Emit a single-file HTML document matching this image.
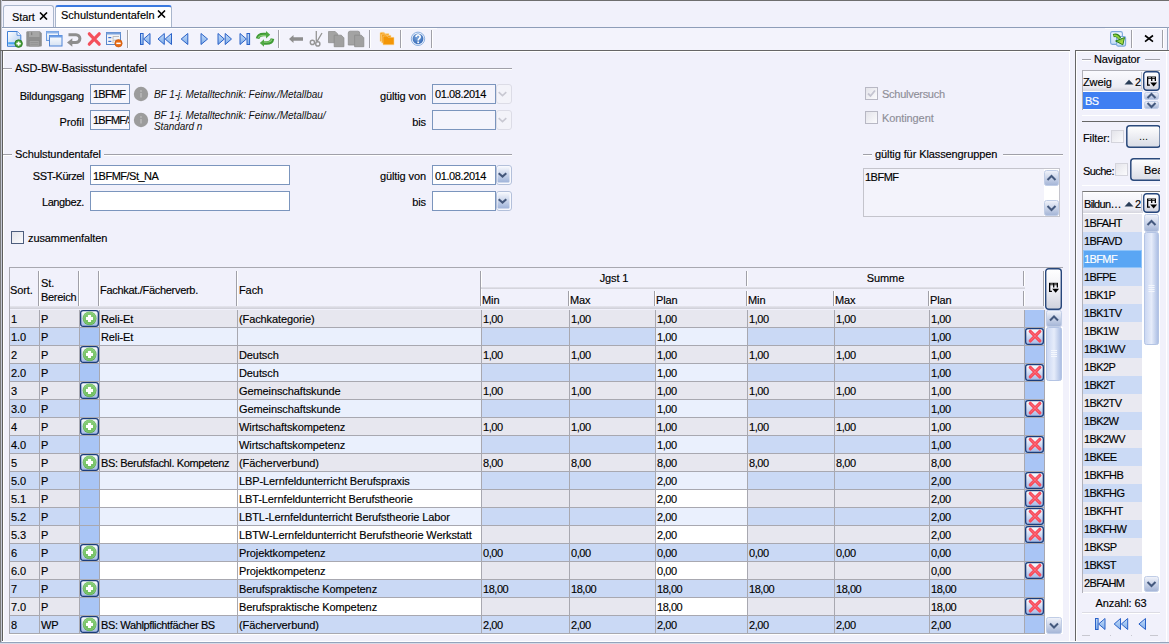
<!DOCTYPE html><html><head><meta charset="utf-8"><style>
html,body{margin:0;padding:0;}
body{width:1169px;height:644px;overflow:hidden;position:relative;background:#f1f1fb;font-family:"Liberation Sans",sans-serif;}
body div,body svg{position:absolute;}
.t{font-size:11px;line-height:14px;letter-spacing:-0.1px;color:#000;white-space:nowrap;-webkit-text-stroke:0.15px currentColor;}
.i{font-size:10px;font-style:italic;line-height:11px;letter-spacing:-0.06px;color:#111;white-space:nowrap;}
</style></head><body>
<div style="left:0px;top:0px;width:1169px;height:1px;background:#6e6e6e"></div>
<div style="left:0px;top:0px;width:1px;height:644px;background:#7c7c7c"></div>
<div style="left:1px;top:0px;width:1px;height:644px;background:#c4c8d4"></div>
<div style="left:3px;top:5px;width:51px;height:22px;background:#f6f6fd;border:1px solid #a9b6cc;border-bottom:none;border-radius:3px 3px 0 0;box-sizing:border-box"></div>
<div class="t" style="left:12px;top:10px;">Start</div>
<svg style="left:39px;top:12px" width="9" height="8" viewBox="0 0 9 8"><path d="M1 0.5L8 7.5M8 0.5L1 7.5" stroke="#000" stroke-width="1.6"/></svg>
<div style="left:55px;top:5px;width:117px;height:23px;background:#fff;border:1px solid #a9b6cc;border-top:2px solid #3c7ae0;border-bottom:none;border-radius:3px 3px 0 0;box-sizing:border-box"></div>
<div class="t" style="left:61px;top:8px;letter-spacing:0px">Schulstundentafeln</div>
<svg style="left:157px;top:9.5px" width="9" height="8" viewBox="0 0 9 8"><path d="M1 0.5L8 7.5M8 0.5L1 7.5" stroke="#000" stroke-width="1.6"/></svg>
<div style="left:2px;top:27px;width:1167px;height:1px;background:#8e9db8"></div>
<div style="left:2px;top:28px;width:1167px;height:22px;background:#f3f3fc"></div>
<div style="left:2px;top:28px;width:435px;height:1px;background:#fff"></div>
<div style="left:1105px;top:28px;width:62px;height:1px;background:#fff"></div>
<div style="left:1167px;top:27px;width:1px;height:23px;background:#9aa8c0"></div>
<div style="left:127px;top:30px;width:1px;height:18px;background:#a0a0a8"></div>
<div style="left:128px;top:30px;width:1px;height:18px;background:#fff"></div>
<div style="left:278px;top:30px;width:1px;height:18px;background:#a0a0a8"></div>
<div style="left:279px;top:30px;width:1px;height:18px;background:#fff"></div>
<div style="left:369px;top:30px;width:1px;height:18px;background:#a0a0a8"></div>
<div style="left:370px;top:30px;width:1px;height:18px;background:#fff"></div>
<div style="left:400px;top:30px;width:1px;height:18px;background:#a0a0a8"></div>
<div style="left:401px;top:30px;width:1px;height:18px;background:#fff"></div>
<div style="left:431px;top:30px;width:1px;height:18px;background:#a0a0a8"></div>
<div style="left:432px;top:30px;width:1px;height:18px;background:#fff"></div>
<div style="left:1131px;top:30px;width:1px;height:18px;background:#a0a0a8"></div>
<div style="left:1132px;top:30px;width:1px;height:18px;background:#fff"></div>
<div style="left:1162px;top:30px;width:1px;height:18px;background:#a0a0a8"></div>
<div style="left:1163px;top:30px;width:1px;height:18px;background:#fff"></div>
<svg style="left:0;top:28px" width="440" height="22" viewBox="0 28 440 22">
<defs>
<linearGradient id="gdoc" x1="0" y1="0" x2="1" y2="1"><stop offset="0" stop-color="#ffffff"/><stop offset="1" stop-color="#a9c8f0"/></linearGradient>
<linearGradient id="gnav" x1="0" y1="0" x2="1" y2="0"><stop offset="0" stop-color="#a8cdf8"/><stop offset="1" stop-color="#1f5fcf"/></linearGradient>
<linearGradient id="gnv" x1="0" y1="0" x2="0" y2="1"><stop offset="0" stop-color="#c4dcfa"/><stop offset="1" stop-color="#80ade8"/></linearGradient>
<linearGradient id="gnavl" x1="1" y1="0" x2="0" y2="0"><stop offset="0" stop-color="#a8cdf8"/><stop offset="1" stop-color="#1f5fcf"/></linearGradient>
<linearGradient id="gwin" x1="0" y1="0" x2="0" y2="1"><stop offset="0" stop-color="#ffffff"/><stop offset="1" stop-color="#d5e2f3"/></linearGradient>
<radialGradient id="ghelp" cx="0.45" cy="0.35" r="0.7"><stop offset="0" stop-color="#80a8dc"/><stop offset="1" stop-color="#2e64b4"/></radialGradient>
</defs>
<!-- new doc -->
<path d="M7.5 31.5H17.2L20.8 35.1V46.3H7.5Z" fill="url(#gdoc)" stroke="#3f7fd6" stroke-width="1"/>
<path d="M17 31.5V35.3H20.8" fill="#fff" stroke="#3f7fd6" stroke-width="0.8"/>
<rect x="8.2" y="42.2" width="9" height="2.2" fill="#47a4f0"/>
<circle cx="18.6" cy="43.6" r="3.8" fill="#43a036" stroke="#2a7420" stroke-width="0.8"/>
<path d="M18.6 41.4V45.8M16.4 43.6H20.8" stroke="#fff" stroke-width="1.6"/>
<!-- save -->
<path d="M27.5 31.2H39.8L41.8 33.2V45.6A1 1 0 0 1 40.8 46.6H27.3A1 1 0 0 1 26.3 45.6V32.4A1.2 1.2 0 0 1 27.5 31.2Z" fill="#8f8f8f"/>
<rect x="29" y="31.5" width="10.5" height="5.5" fill="#a6a6a6"/>
<rect x="31.2" y="32.3" width="1" height="2.8" fill="#7a7a7a"/>
<rect x="29.2" y="40.5" width="10" height="5.6" fill="#a4a4a4" stroke="#878787" stroke-width="0.6"/>
<path d="M30.3 42.5H38.2M30.3 44.3H38.2" stroke="#8a8a8a" stroke-width="0.6"/>
<!-- windows -->
<rect x="46.5" y="31.5" width="12" height="9" fill="url(#gwin)" stroke="#6b9be0" stroke-width="1"/>
<rect x="46.5" y="31.5" width="12" height="2" fill="#8fb5ea"/>
<rect x="49.5" y="35.5" width="12.5" height="10.5" fill="url(#gwin)" stroke="#4f84d6" stroke-width="1"/>
<rect x="49.5" y="35.5" width="12.5" height="2" fill="#6f9fe6"/>
<!-- undo -->
<path d="M68.5 34.7H76A3.9 3.9 0 0 1 76 42.5H71" fill="none" stroke="#8e8e8e" stroke-width="3"/>
<path d="M67 42.5L72.3 38.3V46.7Z" fill="#8e8e8e"/>
<!-- red x -->
<path d="M89.3 33.8L99.2 44.2M99.2 33.8L89.3 44.2" stroke="#f4505c" stroke-width="3.2" stroke-linecap="round"/>
<!-- list minus -->
<rect x="106.5" y="32.5" width="14" height="12" fill="#f2f4f8" stroke="#5a88cc" stroke-width="1"/>
<rect x="106.5" y="32.5" width="14" height="2" fill="#7aa2dc"/>
<rect x="108.3" y="37" width="3" height="1.2" fill="#3a6fd0"/><path d="M113 39.5V36.5H119" stroke="#b4b4b4" stroke-width="0.9" fill="none"/>
<rect x="108.3" y="40.8" width="3" height="1.2" fill="#3a6fd0"/><path d="M113 43V40.2H117" stroke="#b4b4b4" stroke-width="0.9" fill="none"/>
<circle cx="118.5" cy="43.3" r="3.7" fill="#e86a12" stroke="#c05008" stroke-width="0.6"/>
<rect x="116.3" y="42.6" width="4.4" height="1.5" fill="#fff"/>
<!-- nav first -->
<rect x="140.5" y="33.5" width="2.6" height="11" fill="url(#gnv)" stroke="#2a62c8" stroke-width="1"/>
<path d="M150 33.5V44.5L143.6 39Z" fill="url(#gnv)" stroke="#2a62c8" stroke-width="1" stroke-linejoin="round"/>
<!-- nav prev page -->
<path d="M164.3 33.5V44.5L158 39Z" fill="url(#gnv)" stroke="#2a62c8" stroke-width="1" stroke-linejoin="round"/>
<path d="M171.5 33.5V44.5L165.2 39Z" fill="url(#gnv)" stroke="#2a62c8" stroke-width="1" stroke-linejoin="round"/>
<!-- prev -->
<path d="M187.8 33.5V44.5L181.2 39Z" fill="url(#gnv)" stroke="#2a62c8" stroke-width="1" stroke-linejoin="round"/>
<!-- next -->
<path d="M201 33.5V44.5L207.6 39Z" fill="url(#gnv)" stroke="#2a62c8" stroke-width="1" stroke-linejoin="round"/>
<!-- next page -->
<path d="M218 33.5V44.5L224.3 39Z" fill="url(#gnv)" stroke="#2a62c8" stroke-width="1" stroke-linejoin="round"/>
<path d="M225.2 33.5V44.5L231.5 39Z" fill="url(#gnv)" stroke="#2a62c8" stroke-width="1" stroke-linejoin="round"/>
<!-- last -->
<path d="M240 33.5V44.5L246.4 39Z" fill="url(#gnv)" stroke="#2a62c8" stroke-width="1" stroke-linejoin="round"/>
<rect x="247" y="33.5" width="2.6" height="11" fill="url(#gnv)" stroke="#2a62c8" stroke-width="1"/>
<!-- refresh -->
<path d="M257.6 38.6Q258.3 34.5 263.5 34.5H266.8" fill="none" stroke="#3f9a35" stroke-width="3.6"/>
<path d="M258.2 37.8Q259 35.3 263.5 35.3H266.8" fill="none" stroke="#86cc74" stroke-width="1.2"/>
<path d="M266 31L270.2 34.8L266 38.6Z" fill="#4fa843"/>
<path d="M272.5 38.6Q271.8 43 266.5 43H263.2" fill="none" stroke="#3f9a35" stroke-width="3.6"/>
<path d="M271.8 39.4Q271 42.2 266.5 42.2H263.2" fill="none" stroke="#86cc74" stroke-width="1.2"/>
<path d="M264 39.2L259.8 43L264 46.7Z" fill="#4fa843"/>
<!-- arrow left -->
<path d="M289 39L293.5 35V37.3H303V40.8H293.5V43Z" fill="#8e8e8e"/>
<!-- scissors -->
<path d="M316.3 31V41.5M322 33L316.8 41.8" stroke="#959595" stroke-width="1.3" fill="none"/>
<circle cx="312.4" cy="42.4" r="2.1" fill="none" stroke="#959595" stroke-width="1.4"/>
<circle cx="317.8" cy="43.9" r="2.1" fill="none" stroke="#959595" stroke-width="1.4"/>
<!-- copy -->
<path d="M328.5 31.5H335.2L337.7 34V42.7H328.5Z" fill="#a3a3a3" stroke="#929292" stroke-width="0.8"/>
<path d="M334.2 35.2H341.3L343.9 37.8V46.7H334.2Z" fill="#a0a0a0" stroke="#8c8c8c" stroke-width="0.8"/>
<!-- paste -->
<path d="M348.3 33A1.8 1.8 0 0 1 350.1 31.2H357.9A1.8 1.8 0 0 1 359.7 33V45H348.3Z" fill="#a3a3a3" stroke="#8e8e8e" stroke-width="0.8"/>
<path d="M354.6 35.2H361.3L363.8 37.7V46.7H354.6Z" fill="#a0a0a0" stroke="#8c8c8c" stroke-width="0.8"/>
<!-- folder -->
<path d="M380 33.2A1 1 0 0 1 381 32.2H384L385 33.5H389V41.5H380Z" fill="#f6a21c" stroke="#fde2b0" stroke-width="0.6"/>
<path d="M381.6 35A1 1 0 0 1 382.6 34H385.5L386.5 35.3H391V43H381.6Z" fill="#f59c12" stroke="#fde2b0" stroke-width="0.6"/>
<path d="M383 37A1 1 0 0 1 384 36H387.2L388.2 37.3H394V44.8H383Z" fill="#f39606" stroke="#fbd79a" stroke-width="0.5"/>
<!-- help -->
<circle cx="418" cy="38.8" r="6.7" fill="#eaf1fb" stroke="#8db0e0" stroke-width="1"/>
<circle cx="418" cy="38.8" r="5.4" fill="url(#ghelp)"/>
<path d="M416 36.9A2.1 2 0 1 1 419.2 38.6C418.5 39 418.2 39.4 418.2 40.4" fill="none" stroke="#fff" stroke-width="1.6"/>
<rect x="417.3" y="41.5" width="1.8" height="1.7" fill="#fff"/>
</svg>
<svg style="left:1100px;top:28px" width="69" height="22" viewBox="1100 28 69 22">
<defs><linearGradient id="gsy" x1="0" y1="0" x2="0" y2="1"><stop offset="0" stop-color="#f4f9ff"/><stop offset="1" stop-color="#c3dcf6"/></linearGradient>
<linearGradient id="gar" x1="0" y1="0" x2="1" y2="1"><stop offset="0" stop-color="#4cb030"/><stop offset="1" stop-color="#d8ec50"/></linearGradient></defs>
<rect x="1110.6" y="31.6" width="11.8" height="12.8" rx="1.8" fill="url(#gsy)" stroke="#7aa6da" stroke-width="1.1"/>
<rect x="1116.6" y="36.5" width="9" height="9.6" rx="1.5" fill="url(#gsy)" stroke="#7aa6da" stroke-width="1.1"/>
<path d="M1113.3 35.6Q1117.5 34.2 1119.6 38.4" fill="none" stroke="#257c18" stroke-width="3.4"/>
<path d="M1113.6 35.6Q1117.3 34.8 1119.4 38.6" fill="none" stroke="#8fd23c" stroke-width="1.7"/>
<path d="M1115.6 41L1124.5 37.5L1122.8 44.8Z" fill="url(#gar)" stroke="#257c18" stroke-width="1" stroke-linejoin="round"/>
<path d="M1145 35.5L1153 41.7M1153 35.5L1145 41.7" stroke="#000" stroke-width="1.6"/>
</svg>

<div style="left:0px;top:50px;width:1070px;height:1px;background:#666"></div>
<div style="left:2px;top:51px;width:1067px;height:1px;background:#fff"></div>
<div style="left:2px;top:50px;width:1px;height:591px;background:#5e5e5e"></div>
<div style="left:3px;top:51px;width:1px;height:590px;background:#fff"></div>
<div style="left:1069px;top:51px;width:1px;height:592px;background:#fff"></div>
<div style="left:1075px;top:50px;width:94px;height:1px;background:#666"></div>
<div style="left:1075px;top:50px;width:1px;height:591px;background:#666"></div>
<div style="left:1076px;top:51px;width:93px;height:1px;background:#fff"></div>
<div style="left:1076px;top:51px;width:1px;height:592px;background:#fff"></div>
<div style="left:1166px;top:52px;width:1px;height:590px;background:#fff"></div>
<div style="left:2px;top:641px;width:1167px;height:1px;background:#fff"></div>
<div style="left:0px;top:642px;width:1169px;height:1px;background:#94a4bc"></div>
<div style="left:0px;top:643px;width:1169px;height:1px;background:#d8dae6"></div>
<div style="left:3px;top:68px;width:9px;height:1px;background:#a0a0a8"></div>
<div style="left:3px;top:69px;width:9px;height:1px;background:#fff"></div>
<div style="left:150px;top:68px;width:362px;height:1px;background:#a0a0a8"></div>
<div style="left:150px;top:69px;width:362px;height:1px;background:#fff"></div>
<div class="t" style="left:15px;top:61px;">ASD-BW-Basisstundentafel</div>
<div class="t" style="left:-316px;width:400px;text-align:right;top:89px;letter-spacing:-0.2px">Bildungsgang</div>
<div style="left:90px;top:84px;width:40px;height:20px;background:#f6f6fd;border:1px solid #7b95bd;box-sizing:border-box"></div>
<div class="t" style="left:93px;top:87px;letter-spacing:-0.75px">1BFMF</div>
<svg style="left:133px;top:86px" width="16" height="16" viewBox="0 0 16 16"><circle cx="8" cy="8" r="7.2" fill="#9c9c9c"/><rect x="7.2" y="7" width="1.6" height="4.5" fill="#b9b9b9"/><circle cx="8" cy="5" r="0.9" fill="#b9b9b9"/></svg>
<div class="i" style="left:154px;top:89px">BF 1-j. Metalltechnik: Feinw./Metallbau</div>
<div class="t" style="left:26px;width:400px;text-align:right;top:89px;">gültig von</div>
<div style="left:432px;top:84px;width:64px;height:20px;background:#f4f4fc;border:1px solid #7b95bd;box-sizing:border-box"></div>
<div class="t" style="left:435px;top:87px;letter-spacing:-0.4px">01.08.2014</div>
<svg style="left:496px;top:84px" width="16" height="20" viewBox="0 0 16 20"><rect x="0.5" y="0.5" width="15" height="19" rx="2.5" fill="#f3f3f9" stroke="#dcdce6"/><path d="M2.7 8.2L6.5 11.6L10.3 8.2" stroke="#c8c8d2" stroke-width="1.6" fill="none"/></svg>
<div class="t" style="left:-316px;width:400px;text-align:right;top:115px;">Profil</div>
<div style="left:90px;top:110px;width:40px;height:20px;overflow:hidden;background:#f6f6fd;border:1px solid #7b95bd;box-sizing:border-box"><div class="t" style="left:2px;top:2px;letter-spacing:-0.75px">1BFMF/St</div></div>
<svg style="left:133px;top:112px" width="16" height="16" viewBox="0 0 16 16"><circle cx="8" cy="8" r="7.2" fill="#9c9c9c"/><rect x="7.2" y="7" width="1.6" height="4.5" fill="#b9b9b9"/><circle cx="8" cy="5" r="0.9" fill="#b9b9b9"/></svg>
<div class="i" style="left:154px;top:110px">BF 1-j. Metalltechnik: Feinw./Metallbau/<br>Standard n</div>
<div class="t" style="left:26px;width:400px;text-align:right;top:115px;">bis</div>
<div style="left:432px;top:110px;width:64px;height:20px;background:#f4f4fc;border:1px solid #7b95bd;box-sizing:border-box"></div>
<svg style="left:496px;top:110px" width="16" height="20" viewBox="0 0 16 20"><rect x="0.5" y="0.5" width="15" height="19" rx="2.5" fill="#f3f3f9" stroke="#dcdce6"/><path d="M2.7 8.2L6.5 11.6L10.3 8.2" stroke="#c8c8d2" stroke-width="1.6" fill="none"/></svg>
<div style="left:865px;top:87px;width:13px;height:13px;box-sizing:border-box;border:1px solid #b8b8c4;background:linear-gradient(135deg,#e4e4ea,#fbfbfd)"></div>
<svg style="left:865px;top:87px" width="13" height="13" viewBox="0 0 13 13"><path d="M3 6.5L5.5 9L10 3.5" stroke="#c4c4d0" stroke-width="1.8" fill="none"/></svg>
<div class="t" style="left:882px;top:87px;color:#8e8e98;letter-spacing:-0.27px">Schulversuch</div>
<div style="left:865px;top:111px;width:13px;height:13px;box-sizing:border-box;border:1px solid #b8b8c4;background:linear-gradient(135deg,#e4e4ea,#fbfbfd)"></div>
<div class="t" style="left:882px;top:111px;color:#8e8e98">Kontingent</div>
<div style="left:3px;top:154px;width:9px;height:1px;background:#a0a0a8"></div>
<div style="left:3px;top:155px;width:9px;height:1px;background:#fff"></div>
<div style="left:104px;top:154px;width:408px;height:1px;background:#a0a0a8"></div>
<div style="left:104px;top:155px;width:408px;height:1px;background:#fff"></div>
<div class="t" style="left:15px;top:147px;">Schulstundentafel</div>
<div class="t" style="left:-316px;width:400px;text-align:right;top:169px;letter-spacing:-0.45px">SST-Kürzel</div>
<div style="left:90px;top:165px;width:200px;height:20px;background:#fff;border:1px solid #7b95bd;box-sizing:border-box"></div>
<div class="t" style="left:93px;top:169px;letter-spacing:-0.5px">1BFMF/St_NA</div>
<div class="t" style="left:-316px;width:400px;text-align:right;top:195px;letter-spacing:-0.4px">Langbez.</div>
<div style="left:90px;top:191px;width:200px;height:20px;background:#fff;border:1px solid #7b95bd;box-sizing:border-box"></div>
<div class="t" style="left:26px;width:400px;text-align:right;top:169px;">gültig von</div>
<div style="left:432px;top:165px;width:64px;height:20px;background:#fff;border:1px solid #7b95bd;box-sizing:border-box"></div>
<div class="t" style="left:435px;top:169px;letter-spacing:-0.4px">01.08.2014</div>
<svg style="left:496px;top:165px" width="16" height="20" viewBox="0 0 16 20"><defs><linearGradient id="dd496165" x1="0" y1="0" x2="0" y2="1"><stop offset="0" stop-color="#f6f8fd"/><stop offset="1" stop-color="#9fb3d9"/></linearGradient></defs><rect x="0.5" y="0.5" width="15" height="19" rx="2.5" fill="#f8f9fd" stroke="#b3c0da"/><rect x="1.5" y="1.5" width="12" height="16" rx="1" fill="url(#dd496165)"/><path d="M2.7 8.2L6.5 11.6L10.3 8.2" stroke="#44577a" stroke-width="2" fill="none"/></svg>
<div class="t" style="left:26px;width:400px;text-align:right;top:195px;">bis</div>
<div style="left:432px;top:191px;width:64px;height:20px;background:#fff;border:1px solid #7b95bd;box-sizing:border-box"></div>
<svg style="left:496px;top:191px" width="16" height="20" viewBox="0 0 16 20"><defs><linearGradient id="dd496191" x1="0" y1="0" x2="0" y2="1"><stop offset="0" stop-color="#f6f8fd"/><stop offset="1" stop-color="#9fb3d9"/></linearGradient></defs><rect x="0.5" y="0.5" width="15" height="19" rx="2.5" fill="#f8f9fd" stroke="#b3c0da"/><rect x="1.5" y="1.5" width="12" height="16" rx="1" fill="url(#dd496191)"/><path d="M2.7 8.2L6.5 11.6L10.3 8.2" stroke="#44577a" stroke-width="2" fill="none"/></svg>
<div style="left:863px;top:154px;width:9px;height:1px;background:#a0a0a8"></div>
<div style="left:863px;top:155px;width:9px;height:1px;background:#fff"></div>
<div style="left:1003px;top:154px;width:60px;height:1px;background:#a0a0a8"></div>
<div style="left:1003px;top:155px;width:60px;height:1px;background:#fff"></div>
<div class="t" style="left:875px;top:147px;">gültig für Klassengruppen</div>
<div style="left:863px;top:168px;width:197px;height:49px;background:#f3f3fb;border:1px solid #c4c4cc;box-sizing:border-box"></div>
<div class="t" style="left:865px;top:170px;letter-spacing:-0.5px">1BFMF</div>
<div style="left:1044px;top:169px;width:15px;height:47px;background:#fff"></div>
<svg style="left:1044px;top:170px" width="15" height="16" viewBox="0 0 15 16"><defs><linearGradient id="sbk1" x1="0" y1="0" x2="0" y2="1"><stop offset="0" stop-color="#f2f4fb"/><stop offset="1" stop-color="#a3b4d6"/></linearGradient></defs><rect x="0.5" y="0.5" width="14" height="15" rx="2" fill="url(#sbk1)" stroke="#c0cde6"/><path d="M3.5 10.0L7.5 6.0L11.5 10.0" stroke="#44597e" stroke-width="2" fill="none"/></svg>
<svg style="left:1044px;top:200px" width="15" height="16" viewBox="0 0 15 16"><defs><linearGradient id="sbk2" x1="0" y1="0" x2="0" y2="1"><stop offset="0" stop-color="#f2f4fb"/><stop offset="1" stop-color="#a3b4d6"/></linearGradient></defs><rect x="0.5" y="0.5" width="14" height="15" rx="2" fill="url(#sbk2)" stroke="#c0cde6"/><path d="M3.5 6.0L7.5 10.0L11.5 6.0" stroke="#44597e" stroke-width="2" fill="none"/></svg>
<div style="left:11px;top:231px;width:13px;height:13px;box-sizing:border-box;border:1px solid #4d5d7d;background:linear-gradient(135deg,#e4e4ea,#fbfbfd)"></div>
<div class="t" style="left:28px;top:231px;">zusammenfalten</div>
<div style="left:9px;top:267px;width:1054px;height:1px;background:#a8a8b0"></div>
<div style="left:9px;top:267px;width:1px;height:367px;background:#a8a8b0"></div>
<div class="t" style="left:10px;top:283px;">Sort.</div>
<div class="t" style="left:41px;top:276px;">St.</div>
<div class="t" style="left:41px;top:290px;letter-spacing:-0.3px">Bereich</div>
<div class="t" style="left:100px;top:283px;letter-spacing:-0.3px">Fachkat./Fächerverb.</div>
<div class="t" style="left:239px;top:283px;">Fach</div>
<div class="t" style="left:481px;width:266px;text-align:center;top:271px;">Jgst 1</div>
<div class="t" style="left:747px;width:277px;text-align:center;top:271px;">Summe</div>
<div class="t" style="left:482px;top:293px;">Min</div>
<div class="t" style="left:570px;top:293px;">Max</div>
<div class="t" style="left:656px;top:293px;">Plan</div>
<div class="t" style="left:748px;top:293px;">Min</div>
<div class="t" style="left:835px;top:293px;">Max</div>
<div class="t" style="left:930px;top:293px;">Plan</div>
<div style="left:38px;top:271px;width:1px;height:35px;background:#a0a0a8"></div>
<div style="left:39px;top:271px;width:1px;height:35px;background:#fff"></div>
<div style="left:78px;top:271px;width:1px;height:35px;background:#a0a0a8"></div>
<div style="left:79px;top:271px;width:1px;height:35px;background:#fff"></div>
<div style="left:98px;top:271px;width:1px;height:35px;background:#a0a0a8"></div>
<div style="left:99px;top:271px;width:1px;height:35px;background:#fff"></div>
<div style="left:236px;top:271px;width:1px;height:35px;background:#a0a0a8"></div>
<div style="left:237px;top:271px;width:1px;height:35px;background:#fff"></div>
<div style="left:480px;top:271px;width:1px;height:35px;background:#a0a0a8"></div>
<div style="left:481px;top:271px;width:1px;height:35px;background:#fff"></div>
<div style="left:568px;top:291px;width:1px;height:15px;background:#a0a0a8"></div>
<div style="left:569px;top:291px;width:1px;height:15px;background:#fff"></div>
<div style="left:654px;top:291px;width:1px;height:15px;background:#a0a0a8"></div>
<div style="left:655px;top:291px;width:1px;height:15px;background:#fff"></div>
<div style="left:833px;top:291px;width:1px;height:15px;background:#a0a0a8"></div>
<div style="left:834px;top:291px;width:1px;height:15px;background:#fff"></div>
<div style="left:928px;top:291px;width:1px;height:15px;background:#a0a0a8"></div>
<div style="left:929px;top:291px;width:1px;height:15px;background:#fff"></div>
<div style="left:746px;top:271px;width:1px;height:15px;background:#a0a0a8"></div>
<div style="left:747px;top:271px;width:1px;height:15px;background:#fff"></div>
<div style="left:746px;top:291px;width:1px;height:15px;background:#a0a0a8"></div>
<div style="left:747px;top:291px;width:1px;height:15px;background:#fff"></div>
<div style="left:1023px;top:271px;width:1px;height:15px;background:#a0a0a8"></div>
<div style="left:1024px;top:271px;width:1px;height:15px;background:#fff"></div>
<div style="left:1023px;top:291px;width:1px;height:15px;background:#a0a0a8"></div>
<div style="left:1024px;top:291px;width:1px;height:15px;background:#fff"></div>
<div style="left:1043px;top:271px;width:1px;height:35px;background:#a0a0a8"></div>
<div style="left:1044px;top:271px;width:1px;height:35px;background:#fff"></div>
<div style="left:481px;top:287px;width:544px;height:2px;background:linear-gradient(#e4e4ec,#cfcfd8)"></div>
<div style="left:10px;top:306px;width:1034px;height:3px;background:linear-gradient(#e6e6ee,#cdcdd6)"></div>
<div style="left:10px;top:310px;width:29px;height:17px;background:#e7e7ef"></div>
<div style="left:40px;top:310px;width:39px;height:17px;background:#e7e7ef"></div>
<div style="left:80px;top:310px;width:19px;height:17px;background:#e7e7ef"></div>
<div style="left:100px;top:310px;width:137px;height:17px;background:#e7e7ef"></div>
<div style="left:238px;top:310px;width:243px;height:17px;background:#e7e7ef"></div>
<div style="left:482px;top:310px;width:87px;height:17px;background:#e7e7ef"></div>
<div style="left:570px;top:310px;width:85px;height:17px;background:#e7e7ef"></div>
<div style="left:656px;top:310px;width:91px;height:17px;background:#e7e7ef"></div>
<div style="left:748px;top:310px;width:86px;height:17px;background:#e7e7ef"></div>
<div style="left:835px;top:310px;width:94px;height:17px;background:#e7e7ef"></div>
<div style="left:930px;top:310px;width:94px;height:17px;background:#e7e7ef"></div>
<div style="left:1025px;top:310px;width:19px;height:17px;background:#a9c5f5"></div>
<div style="left:10px;top:327px;width:1035px;height:1px;background:#a8a8b0"></div>
<div style="left:39px;top:310px;width:1px;height:17px;background:#a8a8b0"></div>
<div style="left:79px;top:310px;width:1px;height:17px;background:#a8a8b0"></div>
<div style="left:99px;top:310px;width:1px;height:17px;background:#a8a8b0"></div>
<div style="left:237px;top:310px;width:1px;height:17px;background:#a8a8b0"></div>
<div style="left:481px;top:310px;width:1px;height:17px;background:#a8a8b0"></div>
<div style="left:569px;top:310px;width:1px;height:17px;background:#a8a8b0"></div>
<div style="left:655px;top:310px;width:1px;height:17px;background:#a8a8b0"></div>
<div style="left:747px;top:310px;width:1px;height:17px;background:#a8a8b0"></div>
<div style="left:834px;top:310px;width:1px;height:17px;background:#a8a8b0"></div>
<div style="left:929px;top:310px;width:1px;height:17px;background:#a8a8b0"></div>
<div style="left:1024px;top:310px;width:1px;height:17px;background:#a8a8b0"></div>
<div style="left:1044px;top:310px;width:1px;height:17px;background:#a8a8b0"></div>
<div class="t" style="left:11px;top:312px;">1</div>
<div class="t" style="left:41px;top:312px;">P</div>
<svg style="left:80px;top:310px" width="19" height="17" viewBox="0 0 19 17"><defs><linearGradient id="bg0" x1="0" y1="0" x2="0" y2="1"><stop offset="0" stop-color="#ffffff"/><stop offset="1" stop-color="#a2b8e6"/></linearGradient><radialGradient id="gc0" cx="0.5" cy="0.4" r="0.6"><stop offset="0" stop-color="#9ad88a"/><stop offset="0.75" stop-color="#6cbc5c"/><stop offset="1" stop-color="#54a846"/></radialGradient></defs><rect x="0.65" y="0.65" width="17.7" height="15.7" rx="2.5" fill="url(#bg0)" stroke="#1b3d7a" stroke-width="1.3"/><circle cx="9.6" cy="8.4" r="6.9" fill="url(#gc0)"/><circle cx="9.6" cy="8.4" r="5.7" fill="none" stroke="#c4e8b8" stroke-width="0.7" opacity="0.5"/><rect x="6" y="7" width="7" height="3" fill="#fff"/><rect x="8" y="5" width="3" height="7" fill="#fff"/></svg>
<div class="t" style="left:101px;top:312px;">Reli-Et</div>
<div class="t" style="left:239px;top:312px;">(Fachkategorie)</div>
<div class="t" style="left:483px;top:312px;letter-spacing:-0.45px">1,00</div>
<div class="t" style="left:571px;top:312px;letter-spacing:-0.45px">1,00</div>
<div class="t" style="left:657px;top:312px;letter-spacing:-0.45px">1,00</div>
<div class="t" style="left:749px;top:312px;letter-spacing:-0.45px">1,00</div>
<div class="t" style="left:836px;top:312px;letter-spacing:-0.45px">1,00</div>
<div class="t" style="left:931px;top:312px;letter-spacing:-0.45px">1,00</div>
<div style="left:10px;top:328px;width:29px;height:17px;background:#cad9f5"></div>
<div style="left:40px;top:328px;width:39px;height:17px;background:#cad9f5"></div>
<div style="left:80px;top:328px;width:19px;height:17px;background:#a9c5f5"></div>
<div style="left:100px;top:328px;width:137px;height:17px;background:#eaf0fd"></div>
<div style="left:238px;top:328px;width:243px;height:17px;background:#eaf0fd"></div>
<div style="left:482px;top:328px;width:87px;height:17px;background:#cad9f5"></div>
<div style="left:570px;top:328px;width:85px;height:17px;background:#cad9f5"></div>
<div style="left:656px;top:328px;width:91px;height:17px;background:#eaf0fd"></div>
<div style="left:748px;top:328px;width:86px;height:17px;background:#cad9f5"></div>
<div style="left:835px;top:328px;width:94px;height:17px;background:#cad9f5"></div>
<div style="left:930px;top:328px;width:94px;height:17px;background:#cad9f5"></div>
<div style="left:1025px;top:328px;width:19px;height:17px;background:#a9c5f5"></div>
<div style="left:10px;top:345px;width:1035px;height:1px;background:#a8a8b0"></div>
<div style="left:39px;top:328px;width:1px;height:17px;background:#a8a8b0"></div>
<div style="left:79px;top:328px;width:1px;height:17px;background:#a8a8b0"></div>
<div style="left:99px;top:328px;width:1px;height:17px;background:#a8a8b0"></div>
<div style="left:237px;top:328px;width:1px;height:17px;background:#a8a8b0"></div>
<div style="left:481px;top:328px;width:1px;height:17px;background:#a8a8b0"></div>
<div style="left:569px;top:328px;width:1px;height:17px;background:#a8a8b0"></div>
<div style="left:655px;top:328px;width:1px;height:17px;background:#a8a8b0"></div>
<div style="left:747px;top:328px;width:1px;height:17px;background:#a8a8b0"></div>
<div style="left:834px;top:328px;width:1px;height:17px;background:#a8a8b0"></div>
<div style="left:929px;top:328px;width:1px;height:17px;background:#a8a8b0"></div>
<div style="left:1024px;top:328px;width:1px;height:17px;background:#a8a8b0"></div>
<div style="left:1044px;top:328px;width:1px;height:17px;background:#a8a8b0"></div>
<div class="t" style="left:11px;top:330px;">1.0</div>
<div class="t" style="left:41px;top:330px;">P</div>
<div class="t" style="left:101px;top:330px;">Reli-Et</div>
<div class="t" style="left:239px;top:330px;"></div>
<div class="t" style="left:657px;top:330px;letter-spacing:-0.45px">1,00</div>
<div class="t" style="left:931px;top:330px;letter-spacing:-0.45px">1,00</div>
<svg style="left:1025px;top:328px" width="19" height="17" viewBox="0 0 19 17"><defs><linearGradient id="xb1" x1="0" y1="0" x2="0" y2="1"><stop offset="0" stop-color="#ffffff"/><stop offset="1" stop-color="#a2b8e6"/></linearGradient></defs><rect x="0.65" y="0.65" width="17.7" height="15.7" rx="2.5" fill="url(#xb1)" stroke="#1b3d7a" stroke-width="1.3"/><path d="M5.3 3.3L14.8 12.9M14.8 3.3L5.3 12.9" stroke="#f84c5c" stroke-width="3.3" stroke-linecap="round"/><path d="M6 4L14 12M14 4L6 12" stroke="#ff7a86" stroke-width="1" stroke-linecap="round" opacity="0.6"/></svg>
<div style="left:10px;top:346px;width:29px;height:17px;background:#e7e7ef"></div>
<div style="left:40px;top:346px;width:39px;height:17px;background:#e7e7ef"></div>
<div style="left:80px;top:346px;width:19px;height:17px;background:#e7e7ef"></div>
<div style="left:100px;top:346px;width:137px;height:17px;background:#e7e7ef"></div>
<div style="left:238px;top:346px;width:243px;height:17px;background:#e7e7ef"></div>
<div style="left:482px;top:346px;width:87px;height:17px;background:#e7e7ef"></div>
<div style="left:570px;top:346px;width:85px;height:17px;background:#e7e7ef"></div>
<div style="left:656px;top:346px;width:91px;height:17px;background:#e7e7ef"></div>
<div style="left:748px;top:346px;width:86px;height:17px;background:#e7e7ef"></div>
<div style="left:835px;top:346px;width:94px;height:17px;background:#e7e7ef"></div>
<div style="left:930px;top:346px;width:94px;height:17px;background:#e7e7ef"></div>
<div style="left:1025px;top:346px;width:19px;height:17px;background:#a9c5f5"></div>
<div style="left:10px;top:363px;width:1035px;height:1px;background:#a8a8b0"></div>
<div style="left:39px;top:346px;width:1px;height:17px;background:#a8a8b0"></div>
<div style="left:79px;top:346px;width:1px;height:17px;background:#a8a8b0"></div>
<div style="left:99px;top:346px;width:1px;height:17px;background:#a8a8b0"></div>
<div style="left:237px;top:346px;width:1px;height:17px;background:#a8a8b0"></div>
<div style="left:481px;top:346px;width:1px;height:17px;background:#a8a8b0"></div>
<div style="left:569px;top:346px;width:1px;height:17px;background:#a8a8b0"></div>
<div style="left:655px;top:346px;width:1px;height:17px;background:#a8a8b0"></div>
<div style="left:747px;top:346px;width:1px;height:17px;background:#a8a8b0"></div>
<div style="left:834px;top:346px;width:1px;height:17px;background:#a8a8b0"></div>
<div style="left:929px;top:346px;width:1px;height:17px;background:#a8a8b0"></div>
<div style="left:1024px;top:346px;width:1px;height:17px;background:#a8a8b0"></div>
<div style="left:1044px;top:346px;width:1px;height:17px;background:#a8a8b0"></div>
<div class="t" style="left:11px;top:348px;">2</div>
<div class="t" style="left:41px;top:348px;">P</div>
<svg style="left:80px;top:346px" width="19" height="17" viewBox="0 0 19 17"><defs><linearGradient id="bg2" x1="0" y1="0" x2="0" y2="1"><stop offset="0" stop-color="#ffffff"/><stop offset="1" stop-color="#a2b8e6"/></linearGradient><radialGradient id="gc2" cx="0.5" cy="0.4" r="0.6"><stop offset="0" stop-color="#9ad88a"/><stop offset="0.75" stop-color="#6cbc5c"/><stop offset="1" stop-color="#54a846"/></radialGradient></defs><rect x="0.65" y="0.65" width="17.7" height="15.7" rx="2.5" fill="url(#bg2)" stroke="#1b3d7a" stroke-width="1.3"/><circle cx="9.6" cy="8.4" r="6.9" fill="url(#gc2)"/><circle cx="9.6" cy="8.4" r="5.7" fill="none" stroke="#c4e8b8" stroke-width="0.7" opacity="0.5"/><rect x="6" y="7" width="7" height="3" fill="#fff"/><rect x="8" y="5" width="3" height="7" fill="#fff"/></svg>
<div class="t" style="left:101px;top:348px;"></div>
<div class="t" style="left:239px;top:348px;">Deutsch</div>
<div class="t" style="left:483px;top:348px;letter-spacing:-0.45px">1,00</div>
<div class="t" style="left:571px;top:348px;letter-spacing:-0.45px">1,00</div>
<div class="t" style="left:657px;top:348px;letter-spacing:-0.45px">1,00</div>
<div class="t" style="left:749px;top:348px;letter-spacing:-0.45px">1,00</div>
<div class="t" style="left:836px;top:348px;letter-spacing:-0.45px">1,00</div>
<div class="t" style="left:931px;top:348px;letter-spacing:-0.45px">1,00</div>
<div style="left:10px;top:364px;width:29px;height:17px;background:#cad9f5"></div>
<div style="left:40px;top:364px;width:39px;height:17px;background:#cad9f5"></div>
<div style="left:80px;top:364px;width:19px;height:17px;background:#a9c5f5"></div>
<div style="left:100px;top:364px;width:137px;height:17px;background:#eaf0fd"></div>
<div style="left:238px;top:364px;width:243px;height:17px;background:#eaf0fd"></div>
<div style="left:482px;top:364px;width:87px;height:17px;background:#cad9f5"></div>
<div style="left:570px;top:364px;width:85px;height:17px;background:#cad9f5"></div>
<div style="left:656px;top:364px;width:91px;height:17px;background:#eaf0fd"></div>
<div style="left:748px;top:364px;width:86px;height:17px;background:#cad9f5"></div>
<div style="left:835px;top:364px;width:94px;height:17px;background:#cad9f5"></div>
<div style="left:930px;top:364px;width:94px;height:17px;background:#cad9f5"></div>
<div style="left:1025px;top:364px;width:19px;height:17px;background:#a9c5f5"></div>
<div style="left:10px;top:381px;width:1035px;height:1px;background:#a8a8b0"></div>
<div style="left:39px;top:364px;width:1px;height:17px;background:#a8a8b0"></div>
<div style="left:79px;top:364px;width:1px;height:17px;background:#a8a8b0"></div>
<div style="left:99px;top:364px;width:1px;height:17px;background:#a8a8b0"></div>
<div style="left:237px;top:364px;width:1px;height:17px;background:#a8a8b0"></div>
<div style="left:481px;top:364px;width:1px;height:17px;background:#a8a8b0"></div>
<div style="left:569px;top:364px;width:1px;height:17px;background:#a8a8b0"></div>
<div style="left:655px;top:364px;width:1px;height:17px;background:#a8a8b0"></div>
<div style="left:747px;top:364px;width:1px;height:17px;background:#a8a8b0"></div>
<div style="left:834px;top:364px;width:1px;height:17px;background:#a8a8b0"></div>
<div style="left:929px;top:364px;width:1px;height:17px;background:#a8a8b0"></div>
<div style="left:1024px;top:364px;width:1px;height:17px;background:#a8a8b0"></div>
<div style="left:1044px;top:364px;width:1px;height:17px;background:#a8a8b0"></div>
<div class="t" style="left:11px;top:366px;">2.0</div>
<div class="t" style="left:41px;top:366px;">P</div>
<div class="t" style="left:101px;top:366px;"></div>
<div class="t" style="left:239px;top:366px;">Deutsch</div>
<div class="t" style="left:657px;top:366px;letter-spacing:-0.45px">1,00</div>
<div class="t" style="left:931px;top:366px;letter-spacing:-0.45px">1,00</div>
<svg style="left:1025px;top:364px" width="19" height="17" viewBox="0 0 19 17"><defs><linearGradient id="xb3" x1="0" y1="0" x2="0" y2="1"><stop offset="0" stop-color="#ffffff"/><stop offset="1" stop-color="#a2b8e6"/></linearGradient></defs><rect x="0.65" y="0.65" width="17.7" height="15.7" rx="2.5" fill="url(#xb3)" stroke="#1b3d7a" stroke-width="1.3"/><path d="M5.3 3.3L14.8 12.9M14.8 3.3L5.3 12.9" stroke="#f84c5c" stroke-width="3.3" stroke-linecap="round"/><path d="M6 4L14 12M14 4L6 12" stroke="#ff7a86" stroke-width="1" stroke-linecap="round" opacity="0.6"/></svg>
<div style="left:10px;top:382px;width:29px;height:17px;background:#e7e7ef"></div>
<div style="left:40px;top:382px;width:39px;height:17px;background:#e7e7ef"></div>
<div style="left:80px;top:382px;width:19px;height:17px;background:#e7e7ef"></div>
<div style="left:100px;top:382px;width:137px;height:17px;background:#e7e7ef"></div>
<div style="left:238px;top:382px;width:243px;height:17px;background:#e7e7ef"></div>
<div style="left:482px;top:382px;width:87px;height:17px;background:#e7e7ef"></div>
<div style="left:570px;top:382px;width:85px;height:17px;background:#e7e7ef"></div>
<div style="left:656px;top:382px;width:91px;height:17px;background:#e7e7ef"></div>
<div style="left:748px;top:382px;width:86px;height:17px;background:#e7e7ef"></div>
<div style="left:835px;top:382px;width:94px;height:17px;background:#e7e7ef"></div>
<div style="left:930px;top:382px;width:94px;height:17px;background:#e7e7ef"></div>
<div style="left:1025px;top:382px;width:19px;height:17px;background:#a9c5f5"></div>
<div style="left:10px;top:399px;width:1035px;height:1px;background:#a8a8b0"></div>
<div style="left:39px;top:382px;width:1px;height:17px;background:#a8a8b0"></div>
<div style="left:79px;top:382px;width:1px;height:17px;background:#a8a8b0"></div>
<div style="left:99px;top:382px;width:1px;height:17px;background:#a8a8b0"></div>
<div style="left:237px;top:382px;width:1px;height:17px;background:#a8a8b0"></div>
<div style="left:481px;top:382px;width:1px;height:17px;background:#a8a8b0"></div>
<div style="left:569px;top:382px;width:1px;height:17px;background:#a8a8b0"></div>
<div style="left:655px;top:382px;width:1px;height:17px;background:#a8a8b0"></div>
<div style="left:747px;top:382px;width:1px;height:17px;background:#a8a8b0"></div>
<div style="left:834px;top:382px;width:1px;height:17px;background:#a8a8b0"></div>
<div style="left:929px;top:382px;width:1px;height:17px;background:#a8a8b0"></div>
<div style="left:1024px;top:382px;width:1px;height:17px;background:#a8a8b0"></div>
<div style="left:1044px;top:382px;width:1px;height:17px;background:#a8a8b0"></div>
<div class="t" style="left:11px;top:384px;">3</div>
<div class="t" style="left:41px;top:384px;">P</div>
<svg style="left:80px;top:382px" width="19" height="17" viewBox="0 0 19 17"><defs><linearGradient id="bg4" x1="0" y1="0" x2="0" y2="1"><stop offset="0" stop-color="#ffffff"/><stop offset="1" stop-color="#a2b8e6"/></linearGradient><radialGradient id="gc4" cx="0.5" cy="0.4" r="0.6"><stop offset="0" stop-color="#9ad88a"/><stop offset="0.75" stop-color="#6cbc5c"/><stop offset="1" stop-color="#54a846"/></radialGradient></defs><rect x="0.65" y="0.65" width="17.7" height="15.7" rx="2.5" fill="url(#bg4)" stroke="#1b3d7a" stroke-width="1.3"/><circle cx="9.6" cy="8.4" r="6.9" fill="url(#gc4)"/><circle cx="9.6" cy="8.4" r="5.7" fill="none" stroke="#c4e8b8" stroke-width="0.7" opacity="0.5"/><rect x="6" y="7" width="7" height="3" fill="#fff"/><rect x="8" y="5" width="3" height="7" fill="#fff"/></svg>
<div class="t" style="left:101px;top:384px;"></div>
<div class="t" style="left:239px;top:384px;">Gemeinschaftskunde</div>
<div class="t" style="left:483px;top:384px;letter-spacing:-0.45px">1,00</div>
<div class="t" style="left:571px;top:384px;letter-spacing:-0.45px">1,00</div>
<div class="t" style="left:657px;top:384px;letter-spacing:-0.45px">1,00</div>
<div class="t" style="left:749px;top:384px;letter-spacing:-0.45px">1,00</div>
<div class="t" style="left:836px;top:384px;letter-spacing:-0.45px">1,00</div>
<div class="t" style="left:931px;top:384px;letter-spacing:-0.45px">1,00</div>
<div style="left:10px;top:400px;width:29px;height:17px;background:#cad9f5"></div>
<div style="left:40px;top:400px;width:39px;height:17px;background:#cad9f5"></div>
<div style="left:80px;top:400px;width:19px;height:17px;background:#a9c5f5"></div>
<div style="left:100px;top:400px;width:137px;height:17px;background:#eaf0fd"></div>
<div style="left:238px;top:400px;width:243px;height:17px;background:#eaf0fd"></div>
<div style="left:482px;top:400px;width:87px;height:17px;background:#cad9f5"></div>
<div style="left:570px;top:400px;width:85px;height:17px;background:#cad9f5"></div>
<div style="left:656px;top:400px;width:91px;height:17px;background:#eaf0fd"></div>
<div style="left:748px;top:400px;width:86px;height:17px;background:#cad9f5"></div>
<div style="left:835px;top:400px;width:94px;height:17px;background:#cad9f5"></div>
<div style="left:930px;top:400px;width:94px;height:17px;background:#cad9f5"></div>
<div style="left:1025px;top:400px;width:19px;height:17px;background:#a9c5f5"></div>
<div style="left:10px;top:417px;width:1035px;height:1px;background:#a8a8b0"></div>
<div style="left:39px;top:400px;width:1px;height:17px;background:#a8a8b0"></div>
<div style="left:79px;top:400px;width:1px;height:17px;background:#a8a8b0"></div>
<div style="left:99px;top:400px;width:1px;height:17px;background:#a8a8b0"></div>
<div style="left:237px;top:400px;width:1px;height:17px;background:#a8a8b0"></div>
<div style="left:481px;top:400px;width:1px;height:17px;background:#a8a8b0"></div>
<div style="left:569px;top:400px;width:1px;height:17px;background:#a8a8b0"></div>
<div style="left:655px;top:400px;width:1px;height:17px;background:#a8a8b0"></div>
<div style="left:747px;top:400px;width:1px;height:17px;background:#a8a8b0"></div>
<div style="left:834px;top:400px;width:1px;height:17px;background:#a8a8b0"></div>
<div style="left:929px;top:400px;width:1px;height:17px;background:#a8a8b0"></div>
<div style="left:1024px;top:400px;width:1px;height:17px;background:#a8a8b0"></div>
<div style="left:1044px;top:400px;width:1px;height:17px;background:#a8a8b0"></div>
<div class="t" style="left:11px;top:402px;">3.0</div>
<div class="t" style="left:41px;top:402px;">P</div>
<div class="t" style="left:101px;top:402px;"></div>
<div class="t" style="left:239px;top:402px;">Gemeinschaftskunde</div>
<div class="t" style="left:657px;top:402px;letter-spacing:-0.45px">1,00</div>
<div class="t" style="left:931px;top:402px;letter-spacing:-0.45px">1,00</div>
<svg style="left:1025px;top:400px" width="19" height="17" viewBox="0 0 19 17"><defs><linearGradient id="xb5" x1="0" y1="0" x2="0" y2="1"><stop offset="0" stop-color="#ffffff"/><stop offset="1" stop-color="#a2b8e6"/></linearGradient></defs><rect x="0.65" y="0.65" width="17.7" height="15.7" rx="2.5" fill="url(#xb5)" stroke="#1b3d7a" stroke-width="1.3"/><path d="M5.3 3.3L14.8 12.9M14.8 3.3L5.3 12.9" stroke="#f84c5c" stroke-width="3.3" stroke-linecap="round"/><path d="M6 4L14 12M14 4L6 12" stroke="#ff7a86" stroke-width="1" stroke-linecap="round" opacity="0.6"/></svg>
<div style="left:10px;top:418px;width:29px;height:17px;background:#e7e7ef"></div>
<div style="left:40px;top:418px;width:39px;height:17px;background:#e7e7ef"></div>
<div style="left:80px;top:418px;width:19px;height:17px;background:#e7e7ef"></div>
<div style="left:100px;top:418px;width:137px;height:17px;background:#e7e7ef"></div>
<div style="left:238px;top:418px;width:243px;height:17px;background:#e7e7ef"></div>
<div style="left:482px;top:418px;width:87px;height:17px;background:#e7e7ef"></div>
<div style="left:570px;top:418px;width:85px;height:17px;background:#e7e7ef"></div>
<div style="left:656px;top:418px;width:91px;height:17px;background:#e7e7ef"></div>
<div style="left:748px;top:418px;width:86px;height:17px;background:#e7e7ef"></div>
<div style="left:835px;top:418px;width:94px;height:17px;background:#e7e7ef"></div>
<div style="left:930px;top:418px;width:94px;height:17px;background:#e7e7ef"></div>
<div style="left:1025px;top:418px;width:19px;height:17px;background:#a9c5f5"></div>
<div style="left:10px;top:435px;width:1035px;height:1px;background:#a8a8b0"></div>
<div style="left:39px;top:418px;width:1px;height:17px;background:#a8a8b0"></div>
<div style="left:79px;top:418px;width:1px;height:17px;background:#a8a8b0"></div>
<div style="left:99px;top:418px;width:1px;height:17px;background:#a8a8b0"></div>
<div style="left:237px;top:418px;width:1px;height:17px;background:#a8a8b0"></div>
<div style="left:481px;top:418px;width:1px;height:17px;background:#a8a8b0"></div>
<div style="left:569px;top:418px;width:1px;height:17px;background:#a8a8b0"></div>
<div style="left:655px;top:418px;width:1px;height:17px;background:#a8a8b0"></div>
<div style="left:747px;top:418px;width:1px;height:17px;background:#a8a8b0"></div>
<div style="left:834px;top:418px;width:1px;height:17px;background:#a8a8b0"></div>
<div style="left:929px;top:418px;width:1px;height:17px;background:#a8a8b0"></div>
<div style="left:1024px;top:418px;width:1px;height:17px;background:#a8a8b0"></div>
<div style="left:1044px;top:418px;width:1px;height:17px;background:#a8a8b0"></div>
<div class="t" style="left:11px;top:420px;">4</div>
<div class="t" style="left:41px;top:420px;">P</div>
<svg style="left:80px;top:418px" width="19" height="17" viewBox="0 0 19 17"><defs><linearGradient id="bg6" x1="0" y1="0" x2="0" y2="1"><stop offset="0" stop-color="#ffffff"/><stop offset="1" stop-color="#a2b8e6"/></linearGradient><radialGradient id="gc6" cx="0.5" cy="0.4" r="0.6"><stop offset="0" stop-color="#9ad88a"/><stop offset="0.75" stop-color="#6cbc5c"/><stop offset="1" stop-color="#54a846"/></radialGradient></defs><rect x="0.65" y="0.65" width="17.7" height="15.7" rx="2.5" fill="url(#bg6)" stroke="#1b3d7a" stroke-width="1.3"/><circle cx="9.6" cy="8.4" r="6.9" fill="url(#gc6)"/><circle cx="9.6" cy="8.4" r="5.7" fill="none" stroke="#c4e8b8" stroke-width="0.7" opacity="0.5"/><rect x="6" y="7" width="7" height="3" fill="#fff"/><rect x="8" y="5" width="3" height="7" fill="#fff"/></svg>
<div class="t" style="left:101px;top:420px;"></div>
<div class="t" style="left:239px;top:420px;">Wirtschaftskompetenz</div>
<div class="t" style="left:483px;top:420px;letter-spacing:-0.45px">1,00</div>
<div class="t" style="left:571px;top:420px;letter-spacing:-0.45px">1,00</div>
<div class="t" style="left:657px;top:420px;letter-spacing:-0.45px">1,00</div>
<div class="t" style="left:749px;top:420px;letter-spacing:-0.45px">1,00</div>
<div class="t" style="left:836px;top:420px;letter-spacing:-0.45px">1,00</div>
<div class="t" style="left:931px;top:420px;letter-spacing:-0.45px">1,00</div>
<div style="left:10px;top:436px;width:29px;height:17px;background:#cad9f5"></div>
<div style="left:40px;top:436px;width:39px;height:17px;background:#cad9f5"></div>
<div style="left:80px;top:436px;width:19px;height:17px;background:#a9c5f5"></div>
<div style="left:100px;top:436px;width:137px;height:17px;background:#eaf0fd"></div>
<div style="left:238px;top:436px;width:243px;height:17px;background:#eaf0fd"></div>
<div style="left:482px;top:436px;width:87px;height:17px;background:#cad9f5"></div>
<div style="left:570px;top:436px;width:85px;height:17px;background:#cad9f5"></div>
<div style="left:656px;top:436px;width:91px;height:17px;background:#eaf0fd"></div>
<div style="left:748px;top:436px;width:86px;height:17px;background:#cad9f5"></div>
<div style="left:835px;top:436px;width:94px;height:17px;background:#cad9f5"></div>
<div style="left:930px;top:436px;width:94px;height:17px;background:#cad9f5"></div>
<div style="left:1025px;top:436px;width:19px;height:17px;background:#a9c5f5"></div>
<div style="left:10px;top:453px;width:1035px;height:1px;background:#a8a8b0"></div>
<div style="left:39px;top:436px;width:1px;height:17px;background:#a8a8b0"></div>
<div style="left:79px;top:436px;width:1px;height:17px;background:#a8a8b0"></div>
<div style="left:99px;top:436px;width:1px;height:17px;background:#a8a8b0"></div>
<div style="left:237px;top:436px;width:1px;height:17px;background:#a8a8b0"></div>
<div style="left:481px;top:436px;width:1px;height:17px;background:#a8a8b0"></div>
<div style="left:569px;top:436px;width:1px;height:17px;background:#a8a8b0"></div>
<div style="left:655px;top:436px;width:1px;height:17px;background:#a8a8b0"></div>
<div style="left:747px;top:436px;width:1px;height:17px;background:#a8a8b0"></div>
<div style="left:834px;top:436px;width:1px;height:17px;background:#a8a8b0"></div>
<div style="left:929px;top:436px;width:1px;height:17px;background:#a8a8b0"></div>
<div style="left:1024px;top:436px;width:1px;height:17px;background:#a8a8b0"></div>
<div style="left:1044px;top:436px;width:1px;height:17px;background:#a8a8b0"></div>
<div class="t" style="left:11px;top:438px;">4.0</div>
<div class="t" style="left:41px;top:438px;">P</div>
<div class="t" style="left:101px;top:438px;"></div>
<div class="t" style="left:239px;top:438px;">Wirtschaftskompetenz</div>
<div class="t" style="left:657px;top:438px;letter-spacing:-0.45px">1,00</div>
<div class="t" style="left:931px;top:438px;letter-spacing:-0.45px">1,00</div>
<svg style="left:1025px;top:436px" width="19" height="17" viewBox="0 0 19 17"><defs><linearGradient id="xb7" x1="0" y1="0" x2="0" y2="1"><stop offset="0" stop-color="#ffffff"/><stop offset="1" stop-color="#a2b8e6"/></linearGradient></defs><rect x="0.65" y="0.65" width="17.7" height="15.7" rx="2.5" fill="url(#xb7)" stroke="#1b3d7a" stroke-width="1.3"/><path d="M5.3 3.3L14.8 12.9M14.8 3.3L5.3 12.9" stroke="#f84c5c" stroke-width="3.3" stroke-linecap="round"/><path d="M6 4L14 12M14 4L6 12" stroke="#ff7a86" stroke-width="1" stroke-linecap="round" opacity="0.6"/></svg>
<div style="left:10px;top:454px;width:29px;height:17px;background:#e7e7ef"></div>
<div style="left:40px;top:454px;width:39px;height:17px;background:#e7e7ef"></div>
<div style="left:80px;top:454px;width:19px;height:17px;background:#e7e7ef"></div>
<div style="left:100px;top:454px;width:137px;height:17px;background:#e7e7ef"></div>
<div style="left:238px;top:454px;width:243px;height:17px;background:#e7e7ef"></div>
<div style="left:482px;top:454px;width:87px;height:17px;background:#e7e7ef"></div>
<div style="left:570px;top:454px;width:85px;height:17px;background:#e7e7ef"></div>
<div style="left:656px;top:454px;width:91px;height:17px;background:#e7e7ef"></div>
<div style="left:748px;top:454px;width:86px;height:17px;background:#e7e7ef"></div>
<div style="left:835px;top:454px;width:94px;height:17px;background:#e7e7ef"></div>
<div style="left:930px;top:454px;width:94px;height:17px;background:#e7e7ef"></div>
<div style="left:1025px;top:454px;width:19px;height:17px;background:#a9c5f5"></div>
<div style="left:10px;top:471px;width:1035px;height:1px;background:#a8a8b0"></div>
<div style="left:39px;top:454px;width:1px;height:17px;background:#a8a8b0"></div>
<div style="left:79px;top:454px;width:1px;height:17px;background:#a8a8b0"></div>
<div style="left:99px;top:454px;width:1px;height:17px;background:#a8a8b0"></div>
<div style="left:237px;top:454px;width:1px;height:17px;background:#a8a8b0"></div>
<div style="left:481px;top:454px;width:1px;height:17px;background:#a8a8b0"></div>
<div style="left:569px;top:454px;width:1px;height:17px;background:#a8a8b0"></div>
<div style="left:655px;top:454px;width:1px;height:17px;background:#a8a8b0"></div>
<div style="left:747px;top:454px;width:1px;height:17px;background:#a8a8b0"></div>
<div style="left:834px;top:454px;width:1px;height:17px;background:#a8a8b0"></div>
<div style="left:929px;top:454px;width:1px;height:17px;background:#a8a8b0"></div>
<div style="left:1024px;top:454px;width:1px;height:17px;background:#a8a8b0"></div>
<div style="left:1044px;top:454px;width:1px;height:17px;background:#a8a8b0"></div>
<div class="t" style="left:11px;top:456px;">5</div>
<div class="t" style="left:41px;top:456px;">P</div>
<svg style="left:80px;top:454px" width="19" height="17" viewBox="0 0 19 17"><defs><linearGradient id="bg8" x1="0" y1="0" x2="0" y2="1"><stop offset="0" stop-color="#ffffff"/><stop offset="1" stop-color="#a2b8e6"/></linearGradient><radialGradient id="gc8" cx="0.5" cy="0.4" r="0.6"><stop offset="0" stop-color="#9ad88a"/><stop offset="0.75" stop-color="#6cbc5c"/><stop offset="1" stop-color="#54a846"/></radialGradient></defs><rect x="0.65" y="0.65" width="17.7" height="15.7" rx="2.5" fill="url(#bg8)" stroke="#1b3d7a" stroke-width="1.3"/><circle cx="9.6" cy="8.4" r="6.9" fill="url(#gc8)"/><circle cx="9.6" cy="8.4" r="5.7" fill="none" stroke="#c4e8b8" stroke-width="0.7" opacity="0.5"/><rect x="6" y="7" width="7" height="3" fill="#fff"/><rect x="8" y="5" width="3" height="7" fill="#fff"/></svg>
<div class="t" style="left:101px;top:456px;letter-spacing:-0.36px">BS: Berufsfachl. Kompetenz</div>
<div class="t" style="left:239px;top:456px;">(Fächerverbund)</div>
<div class="t" style="left:483px;top:456px;letter-spacing:-0.45px">8,00</div>
<div class="t" style="left:571px;top:456px;letter-spacing:-0.45px">8,00</div>
<div class="t" style="left:657px;top:456px;letter-spacing:-0.45px">8,00</div>
<div class="t" style="left:749px;top:456px;letter-spacing:-0.45px">8,00</div>
<div class="t" style="left:836px;top:456px;letter-spacing:-0.45px">8,00</div>
<div class="t" style="left:931px;top:456px;letter-spacing:-0.45px">8,00</div>
<div style="left:10px;top:472px;width:29px;height:17px;background:#cad9f5"></div>
<div style="left:40px;top:472px;width:39px;height:17px;background:#cad9f5"></div>
<div style="left:80px;top:472px;width:19px;height:17px;background:#a9c5f5"></div>
<div style="left:100px;top:472px;width:137px;height:17px;background:#eaf0fd"></div>
<div style="left:238px;top:472px;width:243px;height:17px;background:#eaf0fd"></div>
<div style="left:482px;top:472px;width:87px;height:17px;background:#cad9f5"></div>
<div style="left:570px;top:472px;width:85px;height:17px;background:#cad9f5"></div>
<div style="left:656px;top:472px;width:91px;height:17px;background:#eaf0fd"></div>
<div style="left:748px;top:472px;width:86px;height:17px;background:#cad9f5"></div>
<div style="left:835px;top:472px;width:94px;height:17px;background:#cad9f5"></div>
<div style="left:930px;top:472px;width:94px;height:17px;background:#cad9f5"></div>
<div style="left:1025px;top:472px;width:19px;height:17px;background:#a9c5f5"></div>
<div style="left:10px;top:489px;width:1035px;height:1px;background:#a8a8b0"></div>
<div style="left:39px;top:472px;width:1px;height:17px;background:#a8a8b0"></div>
<div style="left:79px;top:472px;width:1px;height:17px;background:#a8a8b0"></div>
<div style="left:99px;top:472px;width:1px;height:17px;background:#a8a8b0"></div>
<div style="left:237px;top:472px;width:1px;height:17px;background:#a8a8b0"></div>
<div style="left:481px;top:472px;width:1px;height:17px;background:#a8a8b0"></div>
<div style="left:569px;top:472px;width:1px;height:17px;background:#a8a8b0"></div>
<div style="left:655px;top:472px;width:1px;height:17px;background:#a8a8b0"></div>
<div style="left:747px;top:472px;width:1px;height:17px;background:#a8a8b0"></div>
<div style="left:834px;top:472px;width:1px;height:17px;background:#a8a8b0"></div>
<div style="left:929px;top:472px;width:1px;height:17px;background:#a8a8b0"></div>
<div style="left:1024px;top:472px;width:1px;height:17px;background:#a8a8b0"></div>
<div style="left:1044px;top:472px;width:1px;height:17px;background:#a8a8b0"></div>
<div class="t" style="left:11px;top:474px;">5.0</div>
<div class="t" style="left:41px;top:474px;">P</div>
<div class="t" style="left:101px;top:474px;"></div>
<div class="t" style="left:239px;top:474px;">LBP-Lernfeldunterricht Berufspraxis</div>
<div class="t" style="left:657px;top:474px;letter-spacing:-0.45px">2,00</div>
<div class="t" style="left:931px;top:474px;letter-spacing:-0.45px">2,00</div>
<svg style="left:1025px;top:472px" width="19" height="17" viewBox="0 0 19 17"><defs><linearGradient id="xb9" x1="0" y1="0" x2="0" y2="1"><stop offset="0" stop-color="#ffffff"/><stop offset="1" stop-color="#a2b8e6"/></linearGradient></defs><rect x="0.65" y="0.65" width="17.7" height="15.7" rx="2.5" fill="url(#xb9)" stroke="#1b3d7a" stroke-width="1.3"/><path d="M5.3 3.3L14.8 12.9M14.8 3.3L5.3 12.9" stroke="#f84c5c" stroke-width="3.3" stroke-linecap="round"/><path d="M6 4L14 12M14 4L6 12" stroke="#ff7a86" stroke-width="1" stroke-linecap="round" opacity="0.6"/></svg>
<div style="left:10px;top:490px;width:29px;height:17px;background:#e7e7ef"></div>
<div style="left:40px;top:490px;width:39px;height:17px;background:#e7e7ef"></div>
<div style="left:80px;top:490px;width:19px;height:17px;background:#a9c5f5"></div>
<div style="left:100px;top:490px;width:137px;height:17px;background:#ffffff"></div>
<div style="left:238px;top:490px;width:243px;height:17px;background:#ffffff"></div>
<div style="left:482px;top:490px;width:87px;height:17px;background:#e7e7ef"></div>
<div style="left:570px;top:490px;width:85px;height:17px;background:#e7e7ef"></div>
<div style="left:656px;top:490px;width:91px;height:17px;background:#ffffff"></div>
<div style="left:748px;top:490px;width:86px;height:17px;background:#e7e7ef"></div>
<div style="left:835px;top:490px;width:94px;height:17px;background:#e7e7ef"></div>
<div style="left:930px;top:490px;width:94px;height:17px;background:#e7e7ef"></div>
<div style="left:1025px;top:490px;width:19px;height:17px;background:#a9c5f5"></div>
<div style="left:10px;top:507px;width:1035px;height:1px;background:#a8a8b0"></div>
<div style="left:39px;top:490px;width:1px;height:17px;background:#a8a8b0"></div>
<div style="left:79px;top:490px;width:1px;height:17px;background:#a8a8b0"></div>
<div style="left:99px;top:490px;width:1px;height:17px;background:#a8a8b0"></div>
<div style="left:237px;top:490px;width:1px;height:17px;background:#a8a8b0"></div>
<div style="left:481px;top:490px;width:1px;height:17px;background:#a8a8b0"></div>
<div style="left:569px;top:490px;width:1px;height:17px;background:#a8a8b0"></div>
<div style="left:655px;top:490px;width:1px;height:17px;background:#a8a8b0"></div>
<div style="left:747px;top:490px;width:1px;height:17px;background:#a8a8b0"></div>
<div style="left:834px;top:490px;width:1px;height:17px;background:#a8a8b0"></div>
<div style="left:929px;top:490px;width:1px;height:17px;background:#a8a8b0"></div>
<div style="left:1024px;top:490px;width:1px;height:17px;background:#a8a8b0"></div>
<div style="left:1044px;top:490px;width:1px;height:17px;background:#a8a8b0"></div>
<div class="t" style="left:11px;top:492px;">5.1</div>
<div class="t" style="left:41px;top:492px;">P</div>
<div class="t" style="left:101px;top:492px;"></div>
<div class="t" style="left:239px;top:492px;">LBT-Lernfeldunterricht Berufstheorie</div>
<div class="t" style="left:657px;top:492px;letter-spacing:-0.45px">2,00</div>
<div class="t" style="left:931px;top:492px;letter-spacing:-0.45px">2,00</div>
<svg style="left:1025px;top:490px" width="19" height="17" viewBox="0 0 19 17"><defs><linearGradient id="xb10" x1="0" y1="0" x2="0" y2="1"><stop offset="0" stop-color="#ffffff"/><stop offset="1" stop-color="#a2b8e6"/></linearGradient></defs><rect x="0.65" y="0.65" width="17.7" height="15.7" rx="2.5" fill="url(#xb10)" stroke="#1b3d7a" stroke-width="1.3"/><path d="M5.3 3.3L14.8 12.9M14.8 3.3L5.3 12.9" stroke="#f84c5c" stroke-width="3.3" stroke-linecap="round"/><path d="M6 4L14 12M14 4L6 12" stroke="#ff7a86" stroke-width="1" stroke-linecap="round" opacity="0.6"/></svg>
<div style="left:10px;top:508px;width:29px;height:17px;background:#cad9f5"></div>
<div style="left:40px;top:508px;width:39px;height:17px;background:#cad9f5"></div>
<div style="left:80px;top:508px;width:19px;height:17px;background:#a9c5f5"></div>
<div style="left:100px;top:508px;width:137px;height:17px;background:#eaf0fd"></div>
<div style="left:238px;top:508px;width:243px;height:17px;background:#eaf0fd"></div>
<div style="left:482px;top:508px;width:87px;height:17px;background:#cad9f5"></div>
<div style="left:570px;top:508px;width:85px;height:17px;background:#cad9f5"></div>
<div style="left:656px;top:508px;width:91px;height:17px;background:#eaf0fd"></div>
<div style="left:748px;top:508px;width:86px;height:17px;background:#cad9f5"></div>
<div style="left:835px;top:508px;width:94px;height:17px;background:#cad9f5"></div>
<div style="left:930px;top:508px;width:94px;height:17px;background:#cad9f5"></div>
<div style="left:1025px;top:508px;width:19px;height:17px;background:#a9c5f5"></div>
<div style="left:10px;top:525px;width:1035px;height:1px;background:#a8a8b0"></div>
<div style="left:39px;top:508px;width:1px;height:17px;background:#a8a8b0"></div>
<div style="left:79px;top:508px;width:1px;height:17px;background:#a8a8b0"></div>
<div style="left:99px;top:508px;width:1px;height:17px;background:#a8a8b0"></div>
<div style="left:237px;top:508px;width:1px;height:17px;background:#a8a8b0"></div>
<div style="left:481px;top:508px;width:1px;height:17px;background:#a8a8b0"></div>
<div style="left:569px;top:508px;width:1px;height:17px;background:#a8a8b0"></div>
<div style="left:655px;top:508px;width:1px;height:17px;background:#a8a8b0"></div>
<div style="left:747px;top:508px;width:1px;height:17px;background:#a8a8b0"></div>
<div style="left:834px;top:508px;width:1px;height:17px;background:#a8a8b0"></div>
<div style="left:929px;top:508px;width:1px;height:17px;background:#a8a8b0"></div>
<div style="left:1024px;top:508px;width:1px;height:17px;background:#a8a8b0"></div>
<div style="left:1044px;top:508px;width:1px;height:17px;background:#a8a8b0"></div>
<div class="t" style="left:11px;top:510px;">5.2</div>
<div class="t" style="left:41px;top:510px;">P</div>
<div class="t" style="left:101px;top:510px;"></div>
<div class="t" style="left:239px;top:510px;">LBTL-Lernfeldunterricht Berufstheorie Labor</div>
<div class="t" style="left:657px;top:510px;letter-spacing:-0.45px">2,00</div>
<div class="t" style="left:931px;top:510px;letter-spacing:-0.45px">2,00</div>
<svg style="left:1025px;top:508px" width="19" height="17" viewBox="0 0 19 17"><defs><linearGradient id="xb11" x1="0" y1="0" x2="0" y2="1"><stop offset="0" stop-color="#ffffff"/><stop offset="1" stop-color="#a2b8e6"/></linearGradient></defs><rect x="0.65" y="0.65" width="17.7" height="15.7" rx="2.5" fill="url(#xb11)" stroke="#1b3d7a" stroke-width="1.3"/><path d="M5.3 3.3L14.8 12.9M14.8 3.3L5.3 12.9" stroke="#f84c5c" stroke-width="3.3" stroke-linecap="round"/><path d="M6 4L14 12M14 4L6 12" stroke="#ff7a86" stroke-width="1" stroke-linecap="round" opacity="0.6"/></svg>
<div style="left:10px;top:526px;width:29px;height:17px;background:#e7e7ef"></div>
<div style="left:40px;top:526px;width:39px;height:17px;background:#e7e7ef"></div>
<div style="left:80px;top:526px;width:19px;height:17px;background:#a9c5f5"></div>
<div style="left:100px;top:526px;width:137px;height:17px;background:#ffffff"></div>
<div style="left:238px;top:526px;width:243px;height:17px;background:#ffffff"></div>
<div style="left:482px;top:526px;width:87px;height:17px;background:#e7e7ef"></div>
<div style="left:570px;top:526px;width:85px;height:17px;background:#e7e7ef"></div>
<div style="left:656px;top:526px;width:91px;height:17px;background:#ffffff"></div>
<div style="left:748px;top:526px;width:86px;height:17px;background:#e7e7ef"></div>
<div style="left:835px;top:526px;width:94px;height:17px;background:#e7e7ef"></div>
<div style="left:930px;top:526px;width:94px;height:17px;background:#e7e7ef"></div>
<div style="left:1025px;top:526px;width:19px;height:17px;background:#a9c5f5"></div>
<div style="left:10px;top:543px;width:1035px;height:1px;background:#a8a8b0"></div>
<div style="left:39px;top:526px;width:1px;height:17px;background:#a8a8b0"></div>
<div style="left:79px;top:526px;width:1px;height:17px;background:#a8a8b0"></div>
<div style="left:99px;top:526px;width:1px;height:17px;background:#a8a8b0"></div>
<div style="left:237px;top:526px;width:1px;height:17px;background:#a8a8b0"></div>
<div style="left:481px;top:526px;width:1px;height:17px;background:#a8a8b0"></div>
<div style="left:569px;top:526px;width:1px;height:17px;background:#a8a8b0"></div>
<div style="left:655px;top:526px;width:1px;height:17px;background:#a8a8b0"></div>
<div style="left:747px;top:526px;width:1px;height:17px;background:#a8a8b0"></div>
<div style="left:834px;top:526px;width:1px;height:17px;background:#a8a8b0"></div>
<div style="left:929px;top:526px;width:1px;height:17px;background:#a8a8b0"></div>
<div style="left:1024px;top:526px;width:1px;height:17px;background:#a8a8b0"></div>
<div style="left:1044px;top:526px;width:1px;height:17px;background:#a8a8b0"></div>
<div class="t" style="left:11px;top:528px;">5.3</div>
<div class="t" style="left:41px;top:528px;">P</div>
<div class="t" style="left:101px;top:528px;"></div>
<div class="t" style="left:239px;top:528px;">LBTW-Lernfeldunterricht Berufstheorie Werkstatt</div>
<div class="t" style="left:657px;top:528px;letter-spacing:-0.45px">2,00</div>
<div class="t" style="left:931px;top:528px;letter-spacing:-0.45px">2,00</div>
<svg style="left:1025px;top:526px" width="19" height="17" viewBox="0 0 19 17"><defs><linearGradient id="xb12" x1="0" y1="0" x2="0" y2="1"><stop offset="0" stop-color="#ffffff"/><stop offset="1" stop-color="#a2b8e6"/></linearGradient></defs><rect x="0.65" y="0.65" width="17.7" height="15.7" rx="2.5" fill="url(#xb12)" stroke="#1b3d7a" stroke-width="1.3"/><path d="M5.3 3.3L14.8 12.9M14.8 3.3L5.3 12.9" stroke="#f84c5c" stroke-width="3.3" stroke-linecap="round"/><path d="M6 4L14 12M14 4L6 12" stroke="#ff7a86" stroke-width="1" stroke-linecap="round" opacity="0.6"/></svg>
<div style="left:10px;top:544px;width:29px;height:17px;background:#cad9f5"></div>
<div style="left:40px;top:544px;width:39px;height:17px;background:#cad9f5"></div>
<div style="left:80px;top:544px;width:19px;height:17px;background:#cad9f5"></div>
<div style="left:100px;top:544px;width:137px;height:17px;background:#cad9f5"></div>
<div style="left:238px;top:544px;width:243px;height:17px;background:#cad9f5"></div>
<div style="left:482px;top:544px;width:87px;height:17px;background:#cad9f5"></div>
<div style="left:570px;top:544px;width:85px;height:17px;background:#cad9f5"></div>
<div style="left:656px;top:544px;width:91px;height:17px;background:#cad9f5"></div>
<div style="left:748px;top:544px;width:86px;height:17px;background:#cad9f5"></div>
<div style="left:835px;top:544px;width:94px;height:17px;background:#cad9f5"></div>
<div style="left:930px;top:544px;width:94px;height:17px;background:#cad9f5"></div>
<div style="left:1025px;top:544px;width:19px;height:17px;background:#a9c5f5"></div>
<div style="left:10px;top:561px;width:1035px;height:1px;background:#a8a8b0"></div>
<div style="left:39px;top:544px;width:1px;height:17px;background:#a8a8b0"></div>
<div style="left:79px;top:544px;width:1px;height:17px;background:#a8a8b0"></div>
<div style="left:99px;top:544px;width:1px;height:17px;background:#a8a8b0"></div>
<div style="left:237px;top:544px;width:1px;height:17px;background:#a8a8b0"></div>
<div style="left:481px;top:544px;width:1px;height:17px;background:#a8a8b0"></div>
<div style="left:569px;top:544px;width:1px;height:17px;background:#a8a8b0"></div>
<div style="left:655px;top:544px;width:1px;height:17px;background:#a8a8b0"></div>
<div style="left:747px;top:544px;width:1px;height:17px;background:#a8a8b0"></div>
<div style="left:834px;top:544px;width:1px;height:17px;background:#a8a8b0"></div>
<div style="left:929px;top:544px;width:1px;height:17px;background:#a8a8b0"></div>
<div style="left:1024px;top:544px;width:1px;height:17px;background:#a8a8b0"></div>
<div style="left:1044px;top:544px;width:1px;height:17px;background:#a8a8b0"></div>
<div class="t" style="left:11px;top:546px;">6</div>
<div class="t" style="left:41px;top:546px;">P</div>
<svg style="left:80px;top:544px" width="19" height="17" viewBox="0 0 19 17"><defs><linearGradient id="bg13" x1="0" y1="0" x2="0" y2="1"><stop offset="0" stop-color="#ffffff"/><stop offset="1" stop-color="#a2b8e6"/></linearGradient><radialGradient id="gc13" cx="0.5" cy="0.4" r="0.6"><stop offset="0" stop-color="#9ad88a"/><stop offset="0.75" stop-color="#6cbc5c"/><stop offset="1" stop-color="#54a846"/></radialGradient></defs><rect x="0.65" y="0.65" width="17.7" height="15.7" rx="2.5" fill="url(#bg13)" stroke="#1b3d7a" stroke-width="1.3"/><circle cx="9.6" cy="8.4" r="6.9" fill="url(#gc13)"/><circle cx="9.6" cy="8.4" r="5.7" fill="none" stroke="#c4e8b8" stroke-width="0.7" opacity="0.5"/><rect x="6" y="7" width="7" height="3" fill="#fff"/><rect x="8" y="5" width="3" height="7" fill="#fff"/></svg>
<div class="t" style="left:101px;top:546px;"></div>
<div class="t" style="left:239px;top:546px;">Projektkompetenz</div>
<div class="t" style="left:483px;top:546px;letter-spacing:-0.45px">0,00</div>
<div class="t" style="left:571px;top:546px;letter-spacing:-0.45px">0,00</div>
<div class="t" style="left:657px;top:546px;letter-spacing:-0.45px">0,00</div>
<div class="t" style="left:749px;top:546px;letter-spacing:-0.45px">0,00</div>
<div class="t" style="left:836px;top:546px;letter-spacing:-0.45px">0,00</div>
<div class="t" style="left:931px;top:546px;letter-spacing:-0.45px">0,00</div>
<div style="left:10px;top:562px;width:29px;height:17px;background:#e7e7ef"></div>
<div style="left:40px;top:562px;width:39px;height:17px;background:#e7e7ef"></div>
<div style="left:80px;top:562px;width:19px;height:17px;background:#a9c5f5"></div>
<div style="left:100px;top:562px;width:137px;height:17px;background:#ffffff"></div>
<div style="left:238px;top:562px;width:243px;height:17px;background:#ffffff"></div>
<div style="left:482px;top:562px;width:87px;height:17px;background:#e7e7ef"></div>
<div style="left:570px;top:562px;width:85px;height:17px;background:#e7e7ef"></div>
<div style="left:656px;top:562px;width:91px;height:17px;background:#ffffff"></div>
<div style="left:748px;top:562px;width:86px;height:17px;background:#e7e7ef"></div>
<div style="left:835px;top:562px;width:94px;height:17px;background:#e7e7ef"></div>
<div style="left:930px;top:562px;width:94px;height:17px;background:#e7e7ef"></div>
<div style="left:1025px;top:562px;width:19px;height:17px;background:#a9c5f5"></div>
<div style="left:10px;top:579px;width:1035px;height:1px;background:#a8a8b0"></div>
<div style="left:39px;top:562px;width:1px;height:17px;background:#a8a8b0"></div>
<div style="left:79px;top:562px;width:1px;height:17px;background:#a8a8b0"></div>
<div style="left:99px;top:562px;width:1px;height:17px;background:#a8a8b0"></div>
<div style="left:237px;top:562px;width:1px;height:17px;background:#a8a8b0"></div>
<div style="left:481px;top:562px;width:1px;height:17px;background:#a8a8b0"></div>
<div style="left:569px;top:562px;width:1px;height:17px;background:#a8a8b0"></div>
<div style="left:655px;top:562px;width:1px;height:17px;background:#a8a8b0"></div>
<div style="left:747px;top:562px;width:1px;height:17px;background:#a8a8b0"></div>
<div style="left:834px;top:562px;width:1px;height:17px;background:#a8a8b0"></div>
<div style="left:929px;top:562px;width:1px;height:17px;background:#a8a8b0"></div>
<div style="left:1024px;top:562px;width:1px;height:17px;background:#a8a8b0"></div>
<div style="left:1044px;top:562px;width:1px;height:17px;background:#a8a8b0"></div>
<div class="t" style="left:11px;top:564px;">6.0</div>
<div class="t" style="left:41px;top:564px;">P</div>
<div class="t" style="left:101px;top:564px;"></div>
<div class="t" style="left:239px;top:564px;">Projektkompetenz</div>
<div class="t" style="left:657px;top:564px;letter-spacing:-0.45px">0,00</div>
<div class="t" style="left:931px;top:564px;letter-spacing:-0.45px">0,00</div>
<svg style="left:1025px;top:562px" width="19" height="17" viewBox="0 0 19 17"><defs><linearGradient id="xb14" x1="0" y1="0" x2="0" y2="1"><stop offset="0" stop-color="#ffffff"/><stop offset="1" stop-color="#a2b8e6"/></linearGradient></defs><rect x="0.65" y="0.65" width="17.7" height="15.7" rx="2.5" fill="url(#xb14)" stroke="#1b3d7a" stroke-width="1.3"/><path d="M5.3 3.3L14.8 12.9M14.8 3.3L5.3 12.9" stroke="#f84c5c" stroke-width="3.3" stroke-linecap="round"/><path d="M6 4L14 12M14 4L6 12" stroke="#ff7a86" stroke-width="1" stroke-linecap="round" opacity="0.6"/></svg>
<div style="left:10px;top:580px;width:29px;height:17px;background:#cad9f5"></div>
<div style="left:40px;top:580px;width:39px;height:17px;background:#cad9f5"></div>
<div style="left:80px;top:580px;width:19px;height:17px;background:#cad9f5"></div>
<div style="left:100px;top:580px;width:137px;height:17px;background:#cad9f5"></div>
<div style="left:238px;top:580px;width:243px;height:17px;background:#cad9f5"></div>
<div style="left:482px;top:580px;width:87px;height:17px;background:#cad9f5"></div>
<div style="left:570px;top:580px;width:85px;height:17px;background:#cad9f5"></div>
<div style="left:656px;top:580px;width:91px;height:17px;background:#cad9f5"></div>
<div style="left:748px;top:580px;width:86px;height:17px;background:#cad9f5"></div>
<div style="left:835px;top:580px;width:94px;height:17px;background:#cad9f5"></div>
<div style="left:930px;top:580px;width:94px;height:17px;background:#cad9f5"></div>
<div style="left:1025px;top:580px;width:19px;height:17px;background:#a9c5f5"></div>
<div style="left:10px;top:597px;width:1035px;height:1px;background:#a8a8b0"></div>
<div style="left:39px;top:580px;width:1px;height:17px;background:#a8a8b0"></div>
<div style="left:79px;top:580px;width:1px;height:17px;background:#a8a8b0"></div>
<div style="left:99px;top:580px;width:1px;height:17px;background:#a8a8b0"></div>
<div style="left:237px;top:580px;width:1px;height:17px;background:#a8a8b0"></div>
<div style="left:481px;top:580px;width:1px;height:17px;background:#a8a8b0"></div>
<div style="left:569px;top:580px;width:1px;height:17px;background:#a8a8b0"></div>
<div style="left:655px;top:580px;width:1px;height:17px;background:#a8a8b0"></div>
<div style="left:747px;top:580px;width:1px;height:17px;background:#a8a8b0"></div>
<div style="left:834px;top:580px;width:1px;height:17px;background:#a8a8b0"></div>
<div style="left:929px;top:580px;width:1px;height:17px;background:#a8a8b0"></div>
<div style="left:1024px;top:580px;width:1px;height:17px;background:#a8a8b0"></div>
<div style="left:1044px;top:580px;width:1px;height:17px;background:#a8a8b0"></div>
<div class="t" style="left:11px;top:582px;">7</div>
<div class="t" style="left:41px;top:582px;">P</div>
<svg style="left:80px;top:580px" width="19" height="17" viewBox="0 0 19 17"><defs><linearGradient id="bg15" x1="0" y1="0" x2="0" y2="1"><stop offset="0" stop-color="#ffffff"/><stop offset="1" stop-color="#a2b8e6"/></linearGradient><radialGradient id="gc15" cx="0.5" cy="0.4" r="0.6"><stop offset="0" stop-color="#9ad88a"/><stop offset="0.75" stop-color="#6cbc5c"/><stop offset="1" stop-color="#54a846"/></radialGradient></defs><rect x="0.65" y="0.65" width="17.7" height="15.7" rx="2.5" fill="url(#bg15)" stroke="#1b3d7a" stroke-width="1.3"/><circle cx="9.6" cy="8.4" r="6.9" fill="url(#gc15)"/><circle cx="9.6" cy="8.4" r="5.7" fill="none" stroke="#c4e8b8" stroke-width="0.7" opacity="0.5"/><rect x="6" y="7" width="7" height="3" fill="#fff"/><rect x="8" y="5" width="3" height="7" fill="#fff"/></svg>
<div class="t" style="left:101px;top:582px;"></div>
<div class="t" style="left:239px;top:582px;">Berufspraktische Kompetenz</div>
<div class="t" style="left:483px;top:582px;letter-spacing:-0.45px">18,00</div>
<div class="t" style="left:571px;top:582px;letter-spacing:-0.45px">18,00</div>
<div class="t" style="left:657px;top:582px;letter-spacing:-0.45px">18,00</div>
<div class="t" style="left:749px;top:582px;letter-spacing:-0.45px">18,00</div>
<div class="t" style="left:836px;top:582px;letter-spacing:-0.45px">18,00</div>
<div class="t" style="left:931px;top:582px;letter-spacing:-0.45px">18,00</div>
<div style="left:10px;top:598px;width:29px;height:17px;background:#e7e7ef"></div>
<div style="left:40px;top:598px;width:39px;height:17px;background:#e7e7ef"></div>
<div style="left:80px;top:598px;width:19px;height:17px;background:#a9c5f5"></div>
<div style="left:100px;top:598px;width:137px;height:17px;background:#ffffff"></div>
<div style="left:238px;top:598px;width:243px;height:17px;background:#ffffff"></div>
<div style="left:482px;top:598px;width:87px;height:17px;background:#e7e7ef"></div>
<div style="left:570px;top:598px;width:85px;height:17px;background:#e7e7ef"></div>
<div style="left:656px;top:598px;width:91px;height:17px;background:#ffffff"></div>
<div style="left:748px;top:598px;width:86px;height:17px;background:#e7e7ef"></div>
<div style="left:835px;top:598px;width:94px;height:17px;background:#e7e7ef"></div>
<div style="left:930px;top:598px;width:94px;height:17px;background:#e7e7ef"></div>
<div style="left:1025px;top:598px;width:19px;height:17px;background:#a9c5f5"></div>
<div style="left:10px;top:615px;width:1035px;height:1px;background:#a8a8b0"></div>
<div style="left:39px;top:598px;width:1px;height:17px;background:#a8a8b0"></div>
<div style="left:79px;top:598px;width:1px;height:17px;background:#a8a8b0"></div>
<div style="left:99px;top:598px;width:1px;height:17px;background:#a8a8b0"></div>
<div style="left:237px;top:598px;width:1px;height:17px;background:#a8a8b0"></div>
<div style="left:481px;top:598px;width:1px;height:17px;background:#a8a8b0"></div>
<div style="left:569px;top:598px;width:1px;height:17px;background:#a8a8b0"></div>
<div style="left:655px;top:598px;width:1px;height:17px;background:#a8a8b0"></div>
<div style="left:747px;top:598px;width:1px;height:17px;background:#a8a8b0"></div>
<div style="left:834px;top:598px;width:1px;height:17px;background:#a8a8b0"></div>
<div style="left:929px;top:598px;width:1px;height:17px;background:#a8a8b0"></div>
<div style="left:1024px;top:598px;width:1px;height:17px;background:#a8a8b0"></div>
<div style="left:1044px;top:598px;width:1px;height:17px;background:#a8a8b0"></div>
<div class="t" style="left:11px;top:600px;">7.0</div>
<div class="t" style="left:41px;top:600px;">P</div>
<div class="t" style="left:101px;top:600px;"></div>
<div class="t" style="left:239px;top:600px;">Berufspraktische Kompetenz</div>
<div class="t" style="left:657px;top:600px;letter-spacing:-0.45px">18,00</div>
<div class="t" style="left:931px;top:600px;letter-spacing:-0.45px">18,00</div>
<svg style="left:1025px;top:598px" width="19" height="17" viewBox="0 0 19 17"><defs><linearGradient id="xb16" x1="0" y1="0" x2="0" y2="1"><stop offset="0" stop-color="#ffffff"/><stop offset="1" stop-color="#a2b8e6"/></linearGradient></defs><rect x="0.65" y="0.65" width="17.7" height="15.7" rx="2.5" fill="url(#xb16)" stroke="#1b3d7a" stroke-width="1.3"/><path d="M5.3 3.3L14.8 12.9M14.8 3.3L5.3 12.9" stroke="#f84c5c" stroke-width="3.3" stroke-linecap="round"/><path d="M6 4L14 12M14 4L6 12" stroke="#ff7a86" stroke-width="1" stroke-linecap="round" opacity="0.6"/></svg>
<div style="left:10px;top:616px;width:29px;height:17px;background:#cad9f5"></div>
<div style="left:40px;top:616px;width:39px;height:17px;background:#cad9f5"></div>
<div style="left:80px;top:616px;width:19px;height:17px;background:#cad9f5"></div>
<div style="left:100px;top:616px;width:137px;height:17px;background:#cad9f5"></div>
<div style="left:238px;top:616px;width:243px;height:17px;background:#cad9f5"></div>
<div style="left:482px;top:616px;width:87px;height:17px;background:#cad9f5"></div>
<div style="left:570px;top:616px;width:85px;height:17px;background:#cad9f5"></div>
<div style="left:656px;top:616px;width:91px;height:17px;background:#cad9f5"></div>
<div style="left:748px;top:616px;width:86px;height:17px;background:#cad9f5"></div>
<div style="left:835px;top:616px;width:94px;height:17px;background:#cad9f5"></div>
<div style="left:930px;top:616px;width:94px;height:17px;background:#cad9f5"></div>
<div style="left:1025px;top:616px;width:19px;height:17px;background:#a9c5f5"></div>
<div style="left:10px;top:633px;width:1035px;height:1px;background:#a8a8b0"></div>
<div style="left:39px;top:616px;width:1px;height:17px;background:#a8a8b0"></div>
<div style="left:79px;top:616px;width:1px;height:17px;background:#a8a8b0"></div>
<div style="left:99px;top:616px;width:1px;height:17px;background:#a8a8b0"></div>
<div style="left:237px;top:616px;width:1px;height:17px;background:#a8a8b0"></div>
<div style="left:481px;top:616px;width:1px;height:17px;background:#a8a8b0"></div>
<div style="left:569px;top:616px;width:1px;height:17px;background:#a8a8b0"></div>
<div style="left:655px;top:616px;width:1px;height:17px;background:#a8a8b0"></div>
<div style="left:747px;top:616px;width:1px;height:17px;background:#a8a8b0"></div>
<div style="left:834px;top:616px;width:1px;height:17px;background:#a8a8b0"></div>
<div style="left:929px;top:616px;width:1px;height:17px;background:#a8a8b0"></div>
<div style="left:1024px;top:616px;width:1px;height:17px;background:#a8a8b0"></div>
<div style="left:1044px;top:616px;width:1px;height:17px;background:#a8a8b0"></div>
<div class="t" style="left:11px;top:618px;">8</div>
<div class="t" style="left:41px;top:618px;">WP</div>
<svg style="left:80px;top:616px" width="19" height="17" viewBox="0 0 19 17"><defs><linearGradient id="bg17" x1="0" y1="0" x2="0" y2="1"><stop offset="0" stop-color="#ffffff"/><stop offset="1" stop-color="#a2b8e6"/></linearGradient><radialGradient id="gc17" cx="0.5" cy="0.4" r="0.6"><stop offset="0" stop-color="#9ad88a"/><stop offset="0.75" stop-color="#6cbc5c"/><stop offset="1" stop-color="#54a846"/></radialGradient></defs><rect x="0.65" y="0.65" width="17.7" height="15.7" rx="2.5" fill="url(#bg17)" stroke="#1b3d7a" stroke-width="1.3"/><circle cx="9.6" cy="8.4" r="6.9" fill="url(#gc17)"/><circle cx="9.6" cy="8.4" r="5.7" fill="none" stroke="#c4e8b8" stroke-width="0.7" opacity="0.5"/><rect x="6" y="7" width="7" height="3" fill="#fff"/><rect x="8" y="5" width="3" height="7" fill="#fff"/></svg>
<div class="t" style="left:101px;top:618px;letter-spacing:-0.36px">BS: Wahlpflichtfächer BS</div>
<div class="t" style="left:239px;top:618px;">(Fächerverbund)</div>
<div class="t" style="left:483px;top:618px;letter-spacing:-0.45px">2,00</div>
<div class="t" style="left:571px;top:618px;letter-spacing:-0.45px">2,00</div>
<div class="t" style="left:657px;top:618px;letter-spacing:-0.45px">2,00</div>
<div class="t" style="left:749px;top:618px;letter-spacing:-0.45px">2,00</div>
<div class="t" style="left:836px;top:618px;letter-spacing:-0.45px">2,00</div>
<div class="t" style="left:931px;top:618px;letter-spacing:-0.45px">2,00</div>
<div style="left:9px;top:634px;width:1036px;height:1px;background:#fff"></div>
<svg style="left:1045px;top:268px" width="17" height="42" viewBox="0 0 17 42"><defs><linearGradient id="cct" x1="0" y1="0" x2="0" y2="1"><stop offset="0" stop-color="#ffffff"/><stop offset="0.5" stop-color="#f0f0f6"/><stop offset="1" stop-color="#cdd0dc"/></linearGradient></defs><rect x="0.7" y="0.7" width="15.6" height="40.6" rx="3" fill="url(#cct)" stroke="#27477c" stroke-width="1.4"/><g transform="translate(0.0,9.8)"><rect x="4" y="5" width="9" height="2.4" fill="#000"/><rect x="5.3" y="5.9" width="2.6" height="0.7" fill="#fff"/><rect x="9.2" y="5.9" width="2.6" height="0.7" fill="#fff"/><path d="M4.65 7V13.65H6.9M8.7 7V9.6M12.35 7V9.6" stroke="#000" stroke-width="1.3" fill="none"/><path d="M7.2 11H14.1L10.65 15Z" fill="#000"/></g></svg>
<div style="left:1045px;top:327px;width:18px;height:307px;background:#fff"></div>
<svg style="left:1046px;top:310px" width="16" height="17" viewBox="0 0 16 17"><defs><linearGradient id="sbt1" x1="0" y1="0" x2="0" y2="1"><stop offset="0" stop-color="#f2f4fb"/><stop offset="1" stop-color="#a3b4d6"/></linearGradient></defs><rect x="0.5" y="0.5" width="15" height="16" rx="2" fill="url(#sbt1)" stroke="#c0cde6"/><path d="M4.0 10.5L8.0 6.5L12.0 10.5" stroke="#44597e" stroke-width="2" fill="none"/></svg>
<svg style="left:1046px;top:327px" width="16" height="54" viewBox="0 0 16 54"><defs><linearGradient id="thumb" x1="0" y1="0" x2="1" y2="0"><stop offset="0" stop-color="#c9d6f2"/><stop offset="0.5" stop-color="#e6ecfa"/><stop offset="1" stop-color="#a9bce2"/></linearGradient></defs><rect x="0.5" y="0.5" width="15" height="53" rx="2" fill="url(#thumb)" stroke="#b4c4e4"/><path d="M5 23.5H11M5 25.5H11M5 27.5H11M5 29.5H11" stroke="#f4f7fd" stroke-width="1"/></svg>
<svg style="left:1046px;top:617px" width="16" height="17" viewBox="0 0 16 17"><defs><linearGradient id="sbt2" x1="0" y1="0" x2="0" y2="1"><stop offset="0" stop-color="#f2f4fb"/><stop offset="1" stop-color="#a3b4d6"/></linearGradient></defs><rect x="0.5" y="0.5" width="15" height="16" rx="2" fill="url(#sbt2)" stroke="#c0cde6"/><path d="M4.0 6.5L8.0 10.5L12.0 6.5" stroke="#44597e" stroke-width="2" fill="none"/></svg>
<div style="left:1082px;top:59px;width:9px;height:1px;background:#a0a0a8"></div>
<div style="left:1082px;top:60px;width:9px;height:1px;background:#fff"></div>
<div style="left:1145px;top:59px;width:15px;height:1px;background:#a0a0a8"></div>
<div style="left:1145px;top:60px;width:15px;height:1px;background:#fff"></div>
<div class="t" style="left:1094px;top:52px;">Navigator</div>
<div style="left:1082px;top:70px;width:78px;height:40px;background:#fff;border-top:1px solid #b0b0b8;border-left:1px solid #b0b0b8;box-sizing:border-box"></div>
<div style="left:1083px;top:71px;width:60px;height:20px;background:linear-gradient(#fafafe,#ececf3 80%,#d6d6de)"></div>
<div class="t" style="left:1083px;top:75px;">Zweig</div>
<svg style="left:1124px;top:79px" width="10" height="6" viewBox="0 0 10 6"><path d="M0.5 5.5L5 0.8L9.5 5.5Z" fill="#2a3e58"/></svg>
<div class="t" style="left:1135px;top:75px;">2</div>
<div style="left:1141px;top:72px;width:1px;height:17px;background:#c8c8d0"></div>
<svg style="left:1143px;top:71px" width="17" height="20" viewBox="0 0 17 20"><defs><linearGradient id="ccn1" x1="0" y1="0" x2="0" y2="1"><stop offset="0" stop-color="#ffffff"/><stop offset="0.5" stop-color="#f0f0f6"/><stop offset="1" stop-color="#cdd0dc"/></linearGradient></defs><rect x="0.7" y="0.7" width="15.6" height="18.6" rx="3" fill="url(#ccn1)" stroke="#27477c" stroke-width="1.4"/><g transform="translate(0.0,0.5)"><rect x="4" y="5" width="9" height="2.4" fill="#000"/><rect x="5.3" y="5.9" width="2.6" height="0.7" fill="#fff"/><rect x="9.2" y="5.9" width="2.6" height="0.7" fill="#fff"/><path d="M4.65 7V13.65H6.9M8.7 7V9.6M12.35 7V9.6" stroke="#000" stroke-width="1.3" fill="none"/><path d="M7.2 11H14.1L10.65 15Z" fill="#000"/></g></svg>
<div style="left:1083px;top:92px;width:59px;height:17px;background:#3f7ff2"></div>
<div class="t" style="left:1085px;top:94px;color:#fff;letter-spacing:-0.5px">BS</div>
<div style="left:1142px;top:91px;width:18px;height:19px;background:#f1f1fb"></div>
<svg style="left:1144px;top:92px" width="15" height="8" viewBox="0 0 15 8"><defs><linearGradient id="sbn2" x1="0" y1="0" x2="0" y2="1"><stop offset="0" stop-color="#f2f4fb"/><stop offset="1" stop-color="#a3b4d6"/></linearGradient></defs><rect x="0.5" y="0.5" width="14" height="7" rx="2" fill="url(#sbn2)" stroke="#c0cde6"/><path d="M3.5 6.0L7.5 2.0L11.5 6.0" stroke="#44597e" stroke-width="2" fill="none"/></svg>
<svg style="left:1144px;top:101px" width="15" height="8" viewBox="0 0 15 8"><defs><linearGradient id="sbn3" x1="0" y1="0" x2="0" y2="1"><stop offset="0" stop-color="#f2f4fb"/><stop offset="1" stop-color="#a3b4d6"/></linearGradient></defs><rect x="0.5" y="0.5" width="14" height="7" rx="2" fill="url(#sbn3)" stroke="#c0cde6"/><path d="M3.5 2.0L7.5 6.0L11.5 2.0" stroke="#44597e" stroke-width="2" fill="none"/></svg>
<div style="left:1082px;top:115px;width:78px;height:1px;background:#fff"></div>
<div style="left:1082px;top:121px;width:79px;height:1px;background:#666"></div>
<div class="t" style="left:1083px;top:131px;">Filter:</div>
<div style="left:1111px;top:130px;width:13px;height:13px;box-sizing:border-box;border:1px solid #d4d4dc;background:linear-gradient(135deg,#e4e4ea,#fbfbfd)"></div>
<svg style="left:1126px;top:125px" width="35" height="23" viewBox="0 0 35 23"><defs><linearGradient id="fb" x1="0" y1="0" x2="0" y2="1"><stop offset="0" stop-color="#ffffff"/><stop offset="1" stop-color="#d9dce6"/></linearGradient></defs><rect x="0.8" y="0.8" width="33.4" height="21.4" rx="3" fill="url(#fb)" stroke="#2b4a7c" stroke-width="1.5"/><text x="17.5" y="15" font-family="Liberation Sans" font-size="11" text-anchor="middle" fill="#111">...</text></svg>
<div class="t" style="left:1083px;top:164px;letter-spacing:-0.55px">Suche:</div>
<div style="left:1115px;top:163px;width:13px;height:13px;box-sizing:border-box;border:1px solid #d4d4dc;background:linear-gradient(135deg,#e4e4ea,#fbfbfd)"></div>
<div style="left:1130px;top:158px;width:39px;height:23px;overflow:hidden"><svg style="left:0;top:0" width="45" height="23" viewBox="0 0 45 23"><defs><linearGradient id="sbn" x1="0" y1="0" x2="0" y2="1"><stop offset="0" stop-color="#ffffff"/><stop offset="1" stop-color="#d9dce6"/></linearGradient></defs><rect x="0.8" y="0.8" width="43.4" height="21.4" rx="3" fill="url(#sbn)" stroke="#2b4a7c" stroke-width="1.5"/></svg><div class="t" style="left:14px;top:5px">Bearbeiten</div></div>
<div style="left:1160px;top:120px;width:9px;height:522px;background:#f1f1fb"></div>
<div style="left:1166px;top:52px;width:1px;height:590px;background:#fff"></div>
<div style="left:1082px;top:185px;width:78px;height:1px;background:#fff"></div>
<div style="left:1082px;top:191px;width:78px;height:402px;background:#fff;border-top:1px solid #777;border-left:1px solid #b0b0b8;box-sizing:border-box"></div>
<div style="left:1083px;top:193px;width:60px;height:20px;background:linear-gradient(#fafafe,#ececf3 80%,#d6d6de)"></div>
<div class="t" style="left:1084px;top:197px;letter-spacing:-0.7px">Bildun…</div>
<svg style="left:1124px;top:201px" width="10" height="6" viewBox="0 0 10 6"><path d="M0.5 5.5L5 0.8L9.5 5.5Z" fill="#2a3e58"/></svg>
<div class="t" style="left:1135px;top:197px;">2</div>
<div style="left:1141px;top:194px;width:1px;height:17px;background:#c8c8d0"></div>
<svg style="left:1143px;top:193px" width="17" height="20" viewBox="0 0 17 20"><defs><linearGradient id="ccn4" x1="0" y1="0" x2="0" y2="1"><stop offset="0" stop-color="#ffffff"/><stop offset="0.5" stop-color="#f0f0f6"/><stop offset="1" stop-color="#cdd0dc"/></linearGradient></defs><rect x="0.7" y="0.7" width="15.6" height="18.6" rx="3" fill="url(#ccn4)" stroke="#27477c" stroke-width="1.4"/><g transform="translate(0.0,0.5)"><rect x="4" y="5" width="9" height="2.4" fill="#000"/><rect x="5.3" y="5.9" width="2.6" height="0.7" fill="#fff"/><rect x="9.2" y="5.9" width="2.6" height="0.7" fill="#fff"/><path d="M4.65 7V13.65H6.9M8.7 7V9.6M12.35 7V9.6" stroke="#000" stroke-width="1.3" fill="none"/><path d="M7.2 11H14.1L10.65 15Z" fill="#000"/></g></svg>
<div style="left:1083px;top:214px;width:59px;height:18px;background:#e9e9f1"></div>
<div class="t" style="left:1084px;top:216px;letter-spacing:-0.6px">1BFAHT</div>
<div style="left:1083px;top:232px;width:59px;height:18px;background:#cbdaf5"></div>
<div class="t" style="left:1084px;top:234px;letter-spacing:-0.6px">1BFAVD</div>
<div style="left:1083px;top:250px;width:59px;height:18px;background:#5aa6f4;border:1px solid #8fc3f8;box-sizing:border-box"></div>
<div class="t" style="left:1084px;top:252px;color:#fff;letter-spacing:-0.6px">1BFMF</div>
<div style="left:1083px;top:268px;width:59px;height:18px;background:#cbdaf5"></div>
<div class="t" style="left:1084px;top:270px;letter-spacing:-0.6px">1BFPE</div>
<div style="left:1083px;top:286px;width:59px;height:18px;background:#e9e9f1"></div>
<div class="t" style="left:1084px;top:288px;letter-spacing:-0.6px">1BK1P</div>
<div style="left:1083px;top:304px;width:59px;height:18px;background:#cbdaf5"></div>
<div class="t" style="left:1084px;top:306px;letter-spacing:-0.6px">1BK1TV</div>
<div style="left:1083px;top:322px;width:59px;height:18px;background:#e9e9f1"></div>
<div class="t" style="left:1084px;top:324px;letter-spacing:-0.6px">1BK1W</div>
<div style="left:1083px;top:340px;width:59px;height:18px;background:#cbdaf5"></div>
<div class="t" style="left:1084px;top:342px;letter-spacing:-0.6px">1BK1WV</div>
<div style="left:1083px;top:358px;width:59px;height:18px;background:#e9e9f1"></div>
<div class="t" style="left:1084px;top:360px;letter-spacing:-0.6px">1BK2P</div>
<div style="left:1083px;top:376px;width:59px;height:18px;background:#cbdaf5"></div>
<div class="t" style="left:1084px;top:378px;letter-spacing:-0.6px">1BK2T</div>
<div style="left:1083px;top:394px;width:59px;height:18px;background:#e9e9f1"></div>
<div class="t" style="left:1084px;top:396px;letter-spacing:-0.6px">1BK2TV</div>
<div style="left:1083px;top:412px;width:59px;height:18px;background:#cbdaf5"></div>
<div class="t" style="left:1084px;top:414px;letter-spacing:-0.6px">1BK2W</div>
<div style="left:1083px;top:430px;width:59px;height:18px;background:#e9e9f1"></div>
<div class="t" style="left:1084px;top:432px;letter-spacing:-0.6px">1BK2WV</div>
<div style="left:1083px;top:448px;width:59px;height:18px;background:#cbdaf5"></div>
<div class="t" style="left:1084px;top:450px;letter-spacing:-0.6px">1BKEE</div>
<div style="left:1083px;top:466px;width:59px;height:18px;background:#e9e9f1"></div>
<div class="t" style="left:1084px;top:468px;letter-spacing:-0.6px">1BKFHB</div>
<div style="left:1083px;top:484px;width:59px;height:18px;background:#cbdaf5"></div>
<div class="t" style="left:1084px;top:486px;letter-spacing:-0.6px">1BKFHG</div>
<div style="left:1083px;top:502px;width:59px;height:18px;background:#e9e9f1"></div>
<div class="t" style="left:1084px;top:504px;letter-spacing:-0.6px">1BKFHT</div>
<div style="left:1083px;top:520px;width:59px;height:18px;background:#cbdaf5"></div>
<div class="t" style="left:1084px;top:522px;letter-spacing:-0.6px">1BKFHW</div>
<div style="left:1083px;top:538px;width:59px;height:18px;background:#e9e9f1"></div>
<div class="t" style="left:1084px;top:540px;letter-spacing:-0.6px">1BKSP</div>
<div style="left:1083px;top:556px;width:59px;height:18px;background:#cbdaf5"></div>
<div class="t" style="left:1084px;top:558px;letter-spacing:-0.6px">1BKST</div>
<div style="left:1083px;top:574px;width:59px;height:18px;background:#e9e9f1"></div>
<div class="t" style="left:1084px;top:576px;letter-spacing:-0.6px">2BFAHM</div>
<svg style="left:1144px;top:214px" width="15" height="18" viewBox="0 0 15 18"><defs><linearGradient id="sbn5" x1="0" y1="0" x2="0" y2="1"><stop offset="0" stop-color="#f2f4fb"/><stop offset="1" stop-color="#a3b4d6"/></linearGradient></defs><rect x="0.5" y="0.5" width="14" height="17" rx="2" fill="url(#sbn5)" stroke="#c0cde6"/><path d="M3.5 11.0L7.5 7.0L11.5 11.0" stroke="#44597e" stroke-width="2" fill="none"/></svg>
<svg style="left:1144px;top:232px" width="15" height="113" viewBox="0 0 15 113"><defs><linearGradient id="thumb2" x1="0" y1="0" x2="1" y2="0"><stop offset="0" stop-color="#c9d6f2"/><stop offset="0.5" stop-color="#e6ecfa"/><stop offset="1" stop-color="#a9bce2"/></linearGradient></defs><rect x="0.5" y="0.5" width="14" height="112" rx="2" fill="url(#thumb2)" stroke="#b4c4e4"/><path d="M4.5 53.5H10.5M4.5 55.5H10.5M4.5 57.5H10.5M4.5 59.5H10.5" stroke="#f4f7fd" stroke-width="1"/></svg>
<svg style="left:1144px;top:576px" width="15" height="16" viewBox="0 0 15 16"><defs><linearGradient id="sbn6" x1="0" y1="0" x2="0" y2="1"><stop offset="0" stop-color="#f2f4fb"/><stop offset="1" stop-color="#a3b4d6"/></linearGradient></defs><rect x="0.5" y="0.5" width="14" height="15" rx="2" fill="url(#sbn6)" stroke="#c0cde6"/><path d="M3.5 6.0L7.5 10.0L11.5 6.0" stroke="#44597e" stroke-width="2" fill="none"/></svg>
<div class="t" style="left:1082px;width:78px;text-align:center;top:596px;">Anzahl: 63</div>
<div style="left:1082px;top:612px;width:78px;height:1px;background:#dcdce4"></div>
<div style="left:1082px;top:613px;width:78px;height:1px;background:#fff"></div>
<svg style="left:1090px;top:616px" width="70" height="16" viewBox="1090 616 70 16">
<rect x="1095.5" y="618.5" width="2.6" height="11" fill="url(#gnv)" stroke="#2a62c8" stroke-width="1"/>
<path d="M1105 618.5V629.5L1098.6 624Z" fill="url(#gnv)" stroke="#2a62c8" stroke-width="1" stroke-linejoin="round"/>
<path d="M1120.5 618.5V629.5L1114.2 624Z" fill="url(#gnv)" stroke="#2a62c8" stroke-width="1" stroke-linejoin="round"/>
<path d="M1127.7 618.5V629.5L1121.4 624Z" fill="url(#gnv)" stroke="#2a62c8" stroke-width="1" stroke-linejoin="round"/>
<path d="M1145.5 618.5V629.5L1138.9 624Z" fill="url(#gnv)" stroke="#2a62c8" stroke-width="1" stroke-linejoin="round"/>
</svg>
<div style="left:1082px;top:635px;width:8px;height:1px;background:#c8c8d0"></div>
<div style="left:1110px;top:635px;width:1px;height:1px;background:#c8c8d0"></div>
<div style="left:1131px;top:635px;width:1px;height:1px;background:#c8c8d0"></div>
<div style="left:1150px;top:635px;width:8px;height:1px;background:#c8c8d0"></div>
</body></html>
